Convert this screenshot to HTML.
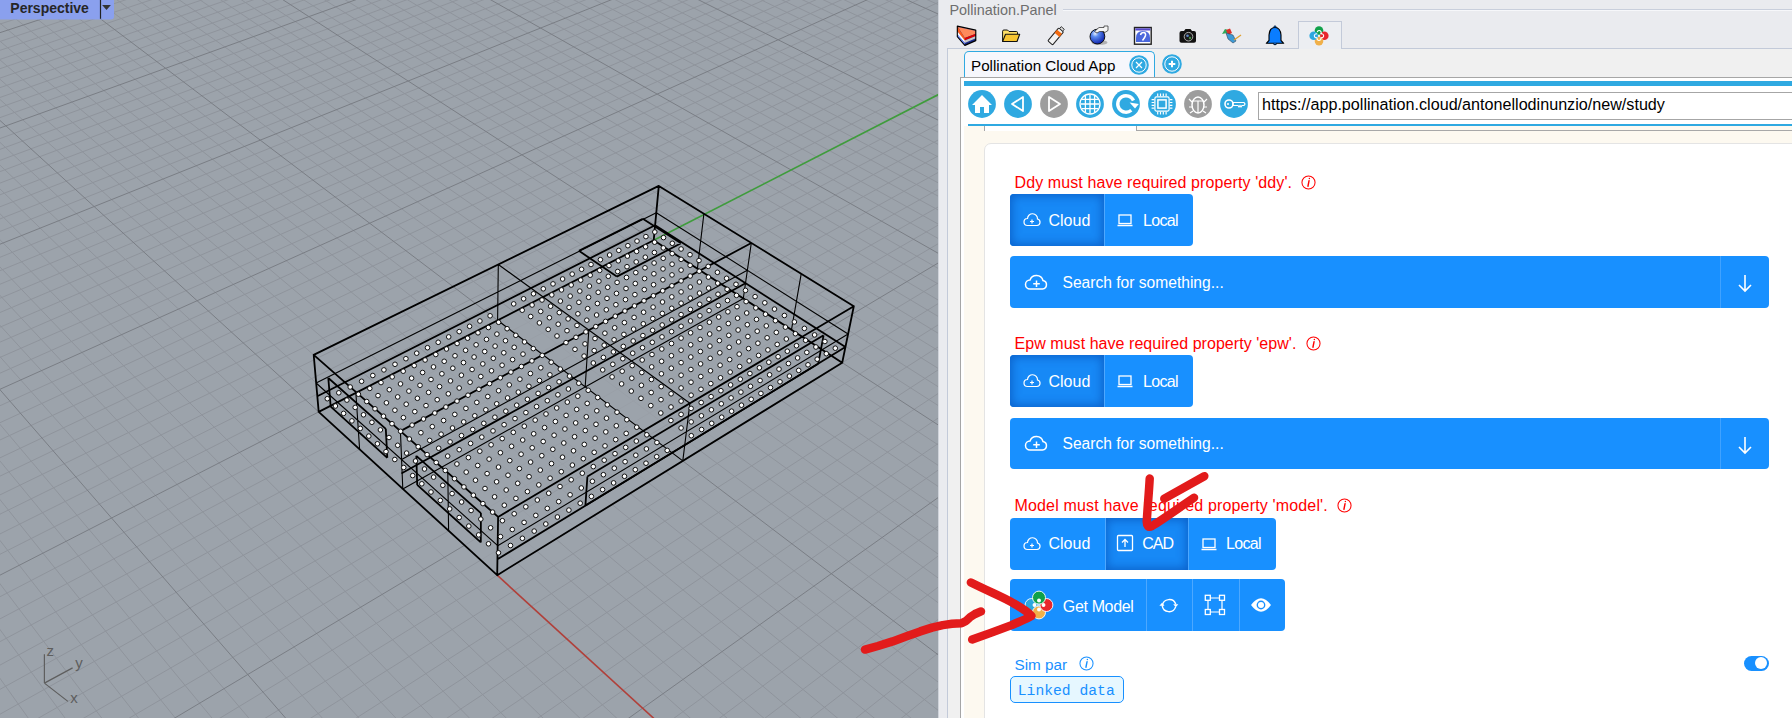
<!DOCTYPE html>
<html><head><meta charset="utf-8"><style>
html,body{margin:0;padding:0;width:1792px;height:718px;overflow:hidden;background:#fff;font-family:"Liberation Sans",sans-serif}
#vp{position:absolute;left:0;top:0;width:938px;height:718px;overflow:hidden}
</style></head><body>
<div id="vp"><svg width="938" height="718" viewBox="0 0 938 718" style="position:absolute;left:0;top:0">
<rect width="938" height="718" fill="#9ca3ab"/>
<path d="M-5 0.8L13.2 -5M-5 8.9L38.6 -5M-5 17.2L64 -5M-5 25.7L89.4 -5M-5 43.1L140.2 -5M-5 52L165.6 -5M-5 61.1L191 -5M-5 70.4L216.4 -5M-5 79.8L241.8 -5M-5 89.4L267.2 -5M-5 99.2L292.6 -5M-5 109.2L318 -5M-5 119.4L343.4 -5M-5 140.4L394.3 -5M-5 151.2L419.7 -5M-5 162.2L445.1 -5M-5 173.5L470.6 -5M-5 185L496 -5M-5 196.7L521.4 -5M-5 208.7L546.9 -5M-5 220.9L572.3 -5M-5 233.4L597.7 -5M-5 259.3L648.6 -5M-5 272.7L674.1 -5M-5 286.3L699.5 -5M-5 671.4L31.8 723M-5 300.3L725 -5M-5 622.8L68.7 723M-5 314.6L750.5 -5M-5 577.2L105.5 723M-5 329.3L775.9 -5M-5 534.1L142.4 723M-5 344.3L801.4 -5M-5 493.4L179.3 723M-5 359.6L826.8 -5M-5 455L216.1 723M-5 375.4L852.3 -5M-5 418.5L253 723M-5 408L903.3 -5M-5 351.1L326.7 723M-5 425L928.7 -5M-5 319.9L363.6 723M-5 442.3L943 0.2M-5 290.1L400.5 723M-5 460.2L943 12.3M-5 261.8L437.4 723M-5 478.5L943 24.8M-5 234.7L474.3 723M-5 497.3L943 37.5M-5 208.8L511.2 723M-5 516.6L943 50.6M-5 184.1L548.1 723M-5 536.4L943 64.1M-5 160.4L585 723M-5 556.8L943 77.9M-5 137.7L621.9 723M-5 599.3L943 106.8M-5 95L695.7 723M-5 621.5L943 121.8M-5 74.9L732.6 723M-5 644.3L943 137.4M-5 55.6L769.5 723M-5 667.8L943 153.3M-5 37L806.4 723M-5 692.1L943 169.8M-5 19.1L843.4 723M-5 717L943 186.7M-5 1.9L880.3 723M29.8 723L943 204.2M7.2 -5L917.2 723M75.3 723L943 222.3M27.8 -5L943 714.2M120.9 723L943 240.9M48.5 -5L943 685.9M211.9 723L943 280M89.7 -5L943 632M257.4 723L943 300.6M110.4 -5L943 606.3M303 723L943 321.8M131 -5L943 581.5M348.5 723L943 343.8M151.7 -5L943 557.5M394.1 723L943 366.7M172.3 -5L943 534.3M439.6 723L943 390.3M192.9 -5L943 511.7M485.2 723L943 414.8M213.6 -5L943 489.8M530.7 723L943 440.2M234.2 -5L943 468.6M576.3 723L943 466.7M254.9 -5L943 448.1M667.4 723L943 522.7M296.2 -5L943 408.6M713 723L943 552.4M316.9 -5L943 389.8M758.6 723L943 583.4M337.5 -5L943 371.4M804.2 723L943 615.6M358.2 -5L943 353.6M849.8 723L943 649.3M378.9 -5L943 336.2M895.4 723L943 684.5M399.5 -5L943 319.3M941 723L943 721.3M420.2 -5L943 302.9M440.9 -5L943 286.8M461.5 -5L943 271.2M502.9 -5L943 241.2M523.5 -5L943 226.7M544.2 -5L943 212.6M564.9 -5L943 198.8M585.6 -5L943 185.4M606.3 -5L943 172.2M627 -5L943 159.4M647.6 -5L943 146.9M668.3 -5L943 134.6M709.7 -5L943 110.9M730.4 -5L943 99.5M751.1 -5L943 88.3M771.8 -5L943 77.3M792.5 -5L943 66.6M813.2 -5L943 56.1M833.9 -5L943 45.8M854.6 -5L943 35.7M875.3 -5L943 25.9M916.7 -5L943 6.7M937.5 -5L943 -2.5" stroke="#8f949c" stroke-width="1" fill="none"/>
<path d="M-5 34.3L114.8 -5M-5 129.8L368.9 -5M-5 246.2L623.2 -5M-5 391.5L877.8 -5M-5 384L289.9 723M166.4 723L943 260.1M69.1 -5L943 658.5M621.9 723L943 494.1M275.6 -5L943 428.1M482.2 -5L943 256M689 -5L943 122.6M896 -5L943 16.2M-5 577.7L318.7 411.9M-5 115.9L318.7 411.9" stroke="#7a7e85" stroke-width="1" fill="none"/>
<path d="M497.2 575.2L658.8 723" stroke="#b0403a" stroke-width="1.6" fill="none"/>
<path d="M653.7 240.3L943 92.2" stroke="#3f9c3c" stroke-width="1.6" fill="none"/>
<polygon points="318.7,411.9 497.2,575.2 842.2,362.7 653.7,240.3" fill="#9ca3ab" fill-opacity="0.75"/>
<path d="M497.6 320.3L682.8 460.9M498.3 264.5L689.9 403.3M402.8 488.9L743.3 298.5M497.6 320.3L498.3 264.5M682.8 460.9L689.9 403.3M402.8 488.9L400.4 431.1M743.3 298.5L751.3 243M585.2 386.9L588.8 330.1M697.4 268.7L703.9 213.7M791.5 329.7L801.2 273.8M359.6 449.3L355.8 391.9M448.6 530.8L447.8 472.7M401.6 459.6L747.3 270.3M316.1 383L497.7 545.7M497.7 545.7L848.1 334M848.1 334L656.3 212.7M656.3 212.7L316.1 383" stroke="#000" stroke-width="1.1" fill="none"/>
<path d="M330.7 406.7L387.3 457.8M387.3 457.8L385.8 428.9M385.8 428.9L328.3 378M328.3 378L330.7 406.7M417.2 484.9L480.8 542.4M480.8 542.4L480.9 513.1M480.9 513.1L416.3 455.8M416.3 455.8L417.2 484.9M578.9 250.8L616.8 276.6M616.8 276.6L681 243.3M681 243.3L642.8 218.8M642.8 218.8L578.9 250.8M585.4 505.6L818.2 363.7M818.2 363.7L823.6 335.3M823.6 335.3L587.4 476.5M587.4 476.5L585.4 505.6" stroke="#000" stroke-width="1.8" fill="none"/>
<path d="M318.7 411.9L497.2 575.2M313.7 354.9L498.1 516.9M318.7 411.9L313.7 354.9M497.2 575.2L842.2 362.7M498.1 516.9L853.8 306.2M497.2 575.2L498.1 516.9M842.2 362.7L653.7 240.3M853.8 306.2L658.8 185.9M842.2 362.7L853.8 306.2M653.7 240.3L318.7 411.9M658.8 185.9L313.7 354.9M653.7 240.3L658.8 185.9M400.4 431.1L751.3 243M497.5 559.3L845.4 347.1M845.4 347.1L655.1 225.3M655.1 225.3L317.3 396.3M402.2 473L745.5 283.2" stroke="#000" stroke-width="1.8" fill="none" stroke-linecap="round"/>
<path d="M327.3 398.7m-2.3 0a2.3 2.3 0 1 0 4.6 0a2.3 2.3 0 1 0 -4.6 0M338.8 392.8m-2.3 0a2.3 2.3 0 1 0 4.6 0a2.3 2.3 0 1 0 -4.6 0M350.2 387m-2.3 0a2.3 2.3 0 1 0 4.6 0a2.3 2.3 0 1 0 -4.6 0M361.6 381.3m-2.3 0a2.3 2.3 0 1 0 4.6 0a2.3 2.3 0 1 0 -4.6 0M372.8 375.5m-2.3 0a2.3 2.3 0 1 0 4.6 0a2.3 2.3 0 1 0 -4.6 0M383.9 369.9m-2.3 0a2.3 2.3 0 1 0 4.6 0a2.3 2.3 0 1 0 -4.6 0M395 364.3m-2.3 0a2.3 2.3 0 1 0 4.6 0a2.3 2.3 0 1 0 -4.6 0M405.9 358.7m-2.3 0a2.3 2.3 0 1 0 4.6 0a2.3 2.3 0 1 0 -4.6 0M416.7 353.2m-2.3 0a2.3 2.3 0 1 0 4.6 0a2.3 2.3 0 1 0 -4.6 0M427.5 347.7m-2.3 0a2.3 2.3 0 1 0 4.6 0a2.3 2.3 0 1 0 -4.6 0M438.2 342.3m-2.3 0a2.3 2.3 0 1 0 4.6 0a2.3 2.3 0 1 0 -4.6 0M448.7 336.9m-2.3 0a2.3 2.3 0 1 0 4.6 0a2.3 2.3 0 1 0 -4.6 0M459.2 331.6m-2.3 0a2.3 2.3 0 1 0 4.6 0a2.3 2.3 0 1 0 -4.6 0M469.6 326.3m-2.3 0a2.3 2.3 0 1 0 4.6 0a2.3 2.3 0 1 0 -4.6 0M479.9 321m-2.3 0a2.3 2.3 0 1 0 4.6 0a2.3 2.3 0 1 0 -4.6 0M490.1 315.8m-2.3 0a2.3 2.3 0 1 0 4.6 0a2.3 2.3 0 1 0 -4.6 0M654.8 232m-2.3 0a2.3 2.3 0 1 0 4.6 0a2.3 2.3 0 1 0 -4.6 0M645.9 236.6m-2.3 0a2.3 2.3 0 1 0 4.6 0a2.3 2.3 0 1 0 -4.6 0M637 241.1m-2.3 0a2.3 2.3 0 1 0 4.6 0a2.3 2.3 0 1 0 -4.6 0M627.9 245.7m-2.3 0a2.3 2.3 0 1 0 4.6 0a2.3 2.3 0 1 0 -4.6 0M618.8 250.4m-2.3 0a2.3 2.3 0 1 0 4.6 0a2.3 2.3 0 1 0 -4.6 0M609.6 255m-2.3 0a2.3 2.3 0 1 0 4.6 0a2.3 2.3 0 1 0 -4.6 0M600.4 259.7m-2.3 0a2.3 2.3 0 1 0 4.6 0a2.3 2.3 0 1 0 -4.6 0M591 264.5m-2.3 0a2.3 2.3 0 1 0 4.6 0a2.3 2.3 0 1 0 -4.6 0M581.6 269.3m-2.3 0a2.3 2.3 0 1 0 4.6 0a2.3 2.3 0 1 0 -4.6 0M572.2 274.1m-2.3 0a2.3 2.3 0 1 0 4.6 0a2.3 2.3 0 1 0 -4.6 0M562.6 279m-2.3 0a2.3 2.3 0 1 0 4.6 0a2.3 2.3 0 1 0 -4.6 0M553 283.9m-2.3 0a2.3 2.3 0 1 0 4.6 0a2.3 2.3 0 1 0 -4.6 0M543.3 288.8m-2.3 0a2.3 2.3 0 1 0 4.6 0a2.3 2.3 0 1 0 -4.6 0M533.5 293.8m-2.3 0a2.3 2.3 0 1 0 4.6 0a2.3 2.3 0 1 0 -4.6 0M523.6 298.8m-2.3 0a2.3 2.3 0 1 0 4.6 0a2.3 2.3 0 1 0 -4.6 0M513.7 303.9m-2.3 0a2.3 2.3 0 1 0 4.6 0a2.3 2.3 0 1 0 -4.6 0M335.4 406m-2.3 0a2.3 2.3 0 1 0 4.6 0a2.3 2.3 0 1 0 -4.6 0M346.9 400.1m-2.3 0a2.3 2.3 0 1 0 4.6 0a2.3 2.3 0 1 0 -4.6 0M358.4 394.2m-2.3 0a2.3 2.3 0 1 0 4.6 0a2.3 2.3 0 1 0 -4.6 0M369.8 388.4m-2.3 0a2.3 2.3 0 1 0 4.6 0a2.3 2.3 0 1 0 -4.6 0M381 382.6m-2.3 0a2.3 2.3 0 1 0 4.6 0a2.3 2.3 0 1 0 -4.6 0M392.2 376.9m-2.3 0a2.3 2.3 0 1 0 4.6 0a2.3 2.3 0 1 0 -4.6 0M403.2 371.2m-2.3 0a2.3 2.3 0 1 0 4.6 0a2.3 2.3 0 1 0 -4.6 0M414.2 365.6m-2.3 0a2.3 2.3 0 1 0 4.6 0a2.3 2.3 0 1 0 -4.6 0M425.1 360m-2.3 0a2.3 2.3 0 1 0 4.6 0a2.3 2.3 0 1 0 -4.6 0M435.8 354.5m-2.3 0a2.3 2.3 0 1 0 4.6 0a2.3 2.3 0 1 0 -4.6 0M446.5 349m-2.3 0a2.3 2.3 0 1 0 4.6 0a2.3 2.3 0 1 0 -4.6 0M457.1 343.5m-2.3 0a2.3 2.3 0 1 0 4.6 0a2.3 2.3 0 1 0 -4.6 0M467.6 338.2m-2.3 0a2.3 2.3 0 1 0 4.6 0a2.3 2.3 0 1 0 -4.6 0M478 332.8m-2.3 0a2.3 2.3 0 1 0 4.6 0a2.3 2.3 0 1 0 -4.6 0M488.4 327.5m-2.3 0a2.3 2.3 0 1 0 4.6 0a2.3 2.3 0 1 0 -4.6 0M498.6 322.3m-2.3 0a2.3 2.3 0 1 0 4.6 0a2.3 2.3 0 1 0 -4.6 0M663.5 237.6m-2.3 0a2.3 2.3 0 1 0 4.6 0a2.3 2.3 0 1 0 -4.6 0M654.6 242.2m-2.3 0a2.3 2.3 0 1 0 4.6 0a2.3 2.3 0 1 0 -4.6 0M645.6 246.8m-2.3 0a2.3 2.3 0 1 0 4.6 0a2.3 2.3 0 1 0 -4.6 0M636.6 251.4m-2.3 0a2.3 2.3 0 1 0 4.6 0a2.3 2.3 0 1 0 -4.6 0M627.4 256.1m-2.3 0a2.3 2.3 0 1 0 4.6 0a2.3 2.3 0 1 0 -4.6 0M618.3 260.8m-2.3 0a2.3 2.3 0 1 0 4.6 0a2.3 2.3 0 1 0 -4.6 0M609 265.6m-2.3 0a2.3 2.3 0 1 0 4.6 0a2.3 2.3 0 1 0 -4.6 0M599.7 270.4m-2.3 0a2.3 2.3 0 1 0 4.6 0a2.3 2.3 0 1 0 -4.6 0M590.2 275.2m-2.3 0a2.3 2.3 0 1 0 4.6 0a2.3 2.3 0 1 0 -4.6 0M580.7 280.1m-2.3 0a2.3 2.3 0 1 0 4.6 0a2.3 2.3 0 1 0 -4.6 0M571.2 285m-2.3 0a2.3 2.3 0 1 0 4.6 0a2.3 2.3 0 1 0 -4.6 0M561.5 289.9m-2.3 0a2.3 2.3 0 1 0 4.6 0a2.3 2.3 0 1 0 -4.6 0M551.8 294.9m-2.3 0a2.3 2.3 0 1 0 4.6 0a2.3 2.3 0 1 0 -4.6 0M542 300m-2.3 0a2.3 2.3 0 1 0 4.6 0a2.3 2.3 0 1 0 -4.6 0M532.1 305m-2.3 0a2.3 2.3 0 1 0 4.6 0a2.3 2.3 0 1 0 -4.6 0M522.2 310.2m-2.3 0a2.3 2.3 0 1 0 4.6 0a2.3 2.3 0 1 0 -4.6 0M343.6 413.4m-2.3 0a2.3 2.3 0 1 0 4.6 0a2.3 2.3 0 1 0 -4.6 0M355.2 407.4m-2.3 0a2.3 2.3 0 1 0 4.6 0a2.3 2.3 0 1 0 -4.6 0M366.7 401.5m-2.3 0a2.3 2.3 0 1 0 4.6 0a2.3 2.3 0 1 0 -4.6 0M378 395.6m-2.3 0a2.3 2.3 0 1 0 4.6 0a2.3 2.3 0 1 0 -4.6 0M389.3 389.7m-2.3 0a2.3 2.3 0 1 0 4.6 0a2.3 2.3 0 1 0 -4.6 0M400.5 383.9m-2.3 0a2.3 2.3 0 1 0 4.6 0a2.3 2.3 0 1 0 -4.6 0M411.6 378.2m-2.3 0a2.3 2.3 0 1 0 4.6 0a2.3 2.3 0 1 0 -4.6 0M422.6 372.5m-2.3 0a2.3 2.3 0 1 0 4.6 0a2.3 2.3 0 1 0 -4.6 0M433.5 366.9m-2.3 0a2.3 2.3 0 1 0 4.6 0a2.3 2.3 0 1 0 -4.6 0M444.2 361.3m-2.3 0a2.3 2.3 0 1 0 4.6 0a2.3 2.3 0 1 0 -4.6 0M455 355.8m-2.3 0a2.3 2.3 0 1 0 4.6 0a2.3 2.3 0 1 0 -4.6 0M465.6 350.3m-2.3 0a2.3 2.3 0 1 0 4.6 0a2.3 2.3 0 1 0 -4.6 0M476.1 344.8m-2.3 0a2.3 2.3 0 1 0 4.6 0a2.3 2.3 0 1 0 -4.6 0M486.5 339.4m-2.3 0a2.3 2.3 0 1 0 4.6 0a2.3 2.3 0 1 0 -4.6 0M496.9 334.1m-2.3 0a2.3 2.3 0 1 0 4.6 0a2.3 2.3 0 1 0 -4.6 0M507.1 328.7m-2.3 0a2.3 2.3 0 1 0 4.6 0a2.3 2.3 0 1 0 -4.6 0M672.3 243.3m-2.3 0a2.3 2.3 0 1 0 4.6 0a2.3 2.3 0 1 0 -4.6 0M663.3 247.9m-2.3 0a2.3 2.3 0 1 0 4.6 0a2.3 2.3 0 1 0 -4.6 0M654.4 252.5m-2.3 0a2.3 2.3 0 1 0 4.6 0a2.3 2.3 0 1 0 -4.6 0M645.3 257.2m-2.3 0a2.3 2.3 0 1 0 4.6 0a2.3 2.3 0 1 0 -4.6 0M636.2 261.9m-2.3 0a2.3 2.3 0 1 0 4.6 0a2.3 2.3 0 1 0 -4.6 0M627 266.7m-2.3 0a2.3 2.3 0 1 0 4.6 0a2.3 2.3 0 1 0 -4.6 0M617.7 271.5m-2.3 0a2.3 2.3 0 1 0 4.6 0a2.3 2.3 0 1 0 -4.6 0M608.3 276.3m-2.3 0a2.3 2.3 0 1 0 4.6 0a2.3 2.3 0 1 0 -4.6 0M598.9 281.2m-2.3 0a2.3 2.3 0 1 0 4.6 0a2.3 2.3 0 1 0 -4.6 0M589.4 286.1m-2.3 0a2.3 2.3 0 1 0 4.6 0a2.3 2.3 0 1 0 -4.6 0M579.8 291.1m-2.3 0a2.3 2.3 0 1 0 4.6 0a2.3 2.3 0 1 0 -4.6 0M570.2 296.1m-2.3 0a2.3 2.3 0 1 0 4.6 0a2.3 2.3 0 1 0 -4.6 0M560.4 301.1m-2.3 0a2.3 2.3 0 1 0 4.6 0a2.3 2.3 0 1 0 -4.6 0M550.6 306.2m-2.3 0a2.3 2.3 0 1 0 4.6 0a2.3 2.3 0 1 0 -4.6 0M540.7 311.4m-2.3 0a2.3 2.3 0 1 0 4.6 0a2.3 2.3 0 1 0 -4.6 0M530.7 316.5m-2.3 0a2.3 2.3 0 1 0 4.6 0a2.3 2.3 0 1 0 -4.6 0M351.9 420.9m-2.3 0a2.3 2.3 0 1 0 4.6 0a2.3 2.3 0 1 0 -4.6 0M363.5 414.8m-2.3 0a2.3 2.3 0 1 0 4.6 0a2.3 2.3 0 1 0 -4.6 0M375 408.8m-2.3 0a2.3 2.3 0 1 0 4.6 0a2.3 2.3 0 1 0 -4.6 0M386.4 402.8m-2.3 0a2.3 2.3 0 1 0 4.6 0a2.3 2.3 0 1 0 -4.6 0M397.7 396.9m-2.3 0a2.3 2.3 0 1 0 4.6 0a2.3 2.3 0 1 0 -4.6 0M408.9 391.1m-2.3 0a2.3 2.3 0 1 0 4.6 0a2.3 2.3 0 1 0 -4.6 0M420 385.3m-2.3 0a2.3 2.3 0 1 0 4.6 0a2.3 2.3 0 1 0 -4.6 0M431 379.5m-2.3 0a2.3 2.3 0 1 0 4.6 0a2.3 2.3 0 1 0 -4.6 0M441.9 373.8m-2.3 0a2.3 2.3 0 1 0 4.6 0a2.3 2.3 0 1 0 -4.6 0M452.8 368.2m-2.3 0a2.3 2.3 0 1 0 4.6 0a2.3 2.3 0 1 0 -4.6 0M463.5 362.6m-2.3 0a2.3 2.3 0 1 0 4.6 0a2.3 2.3 0 1 0 -4.6 0M474.1 357m-2.3 0a2.3 2.3 0 1 0 4.6 0a2.3 2.3 0 1 0 -4.6 0M484.7 351.5m-2.3 0a2.3 2.3 0 1 0 4.6 0a2.3 2.3 0 1 0 -4.6 0M495.1 346.1m-2.3 0a2.3 2.3 0 1 0 4.6 0a2.3 2.3 0 1 0 -4.6 0M505.5 340.7m-2.3 0a2.3 2.3 0 1 0 4.6 0a2.3 2.3 0 1 0 -4.6 0M515.8 335.3m-2.3 0a2.3 2.3 0 1 0 4.6 0a2.3 2.3 0 1 0 -4.6 0M681.1 249m-2.3 0a2.3 2.3 0 1 0 4.6 0a2.3 2.3 0 1 0 -4.6 0M672.2 253.6m-2.3 0a2.3 2.3 0 1 0 4.6 0a2.3 2.3 0 1 0 -4.6 0M663.2 258.3m-2.3 0a2.3 2.3 0 1 0 4.6 0a2.3 2.3 0 1 0 -4.6 0M654.1 263m-2.3 0a2.3 2.3 0 1 0 4.6 0a2.3 2.3 0 1 0 -4.6 0M645 267.8m-2.3 0a2.3 2.3 0 1 0 4.6 0a2.3 2.3 0 1 0 -4.6 0M635.8 272.6m-2.3 0a2.3 2.3 0 1 0 4.6 0a2.3 2.3 0 1 0 -4.6 0M626.5 277.5m-2.3 0a2.3 2.3 0 1 0 4.6 0a2.3 2.3 0 1 0 -4.6 0M617.1 282.4m-2.3 0a2.3 2.3 0 1 0 4.6 0a2.3 2.3 0 1 0 -4.6 0M607.7 287.3m-2.3 0a2.3 2.3 0 1 0 4.6 0a2.3 2.3 0 1 0 -4.6 0M598.2 292.3m-2.3 0a2.3 2.3 0 1 0 4.6 0a2.3 2.3 0 1 0 -4.6 0M588.6 297.3m-2.3 0a2.3 2.3 0 1 0 4.6 0a2.3 2.3 0 1 0 -4.6 0M578.9 302.3m-2.3 0a2.3 2.3 0 1 0 4.6 0a2.3 2.3 0 1 0 -4.6 0M569.1 307.4m-2.3 0a2.3 2.3 0 1 0 4.6 0a2.3 2.3 0 1 0 -4.6 0M559.3 312.6m-2.3 0a2.3 2.3 0 1 0 4.6 0a2.3 2.3 0 1 0 -4.6 0M549.4 317.7m-2.3 0a2.3 2.3 0 1 0 4.6 0a2.3 2.3 0 1 0 -4.6 0M539.4 322.9m-2.3 0a2.3 2.3 0 1 0 4.6 0a2.3 2.3 0 1 0 -4.6 0M360.3 428.4m-2.3 0a2.3 2.3 0 1 0 4.6 0a2.3 2.3 0 1 0 -4.6 0M371.9 422.3m-2.3 0a2.3 2.3 0 1 0 4.6 0a2.3 2.3 0 1 0 -4.6 0M383.5 416.2m-2.3 0a2.3 2.3 0 1 0 4.6 0a2.3 2.3 0 1 0 -4.6 0M394.9 410.2m-2.3 0a2.3 2.3 0 1 0 4.6 0a2.3 2.3 0 1 0 -4.6 0M406.2 404.2m-2.3 0a2.3 2.3 0 1 0 4.6 0a2.3 2.3 0 1 0 -4.6 0M417.4 398.3m-2.3 0a2.3 2.3 0 1 0 4.6 0a2.3 2.3 0 1 0 -4.6 0M428.6 392.4m-2.3 0a2.3 2.3 0 1 0 4.6 0a2.3 2.3 0 1 0 -4.6 0M439.6 386.6m-2.3 0a2.3 2.3 0 1 0 4.6 0a2.3 2.3 0 1 0 -4.6 0M450.5 380.9m-2.3 0a2.3 2.3 0 1 0 4.6 0a2.3 2.3 0 1 0 -4.6 0M461.4 375.2m-2.3 0a2.3 2.3 0 1 0 4.6 0a2.3 2.3 0 1 0 -4.6 0M472.1 369.5m-2.3 0a2.3 2.3 0 1 0 4.6 0a2.3 2.3 0 1 0 -4.6 0M482.8 363.9m-2.3 0a2.3 2.3 0 1 0 4.6 0a2.3 2.3 0 1 0 -4.6 0M493.3 358.3m-2.3 0a2.3 2.3 0 1 0 4.6 0a2.3 2.3 0 1 0 -4.6 0M503.8 352.8m-2.3 0a2.3 2.3 0 1 0 4.6 0a2.3 2.3 0 1 0 -4.6 0M514.2 347.3m-2.3 0a2.3 2.3 0 1 0 4.6 0a2.3 2.3 0 1 0 -4.6 0M524.5 341.9m-2.3 0a2.3 2.3 0 1 0 4.6 0a2.3 2.3 0 1 0 -4.6 0M690 254.7m-2.3 0a2.3 2.3 0 1 0 4.6 0a2.3 2.3 0 1 0 -4.6 0M681.1 259.4m-2.3 0a2.3 2.3 0 1 0 4.6 0a2.3 2.3 0 1 0 -4.6 0M672.1 264.2m-2.3 0a2.3 2.3 0 1 0 4.6 0a2.3 2.3 0 1 0 -4.6 0M663 268.9m-2.3 0a2.3 2.3 0 1 0 4.6 0a2.3 2.3 0 1 0 -4.6 0M653.9 273.8m-2.3 0a2.3 2.3 0 1 0 4.6 0a2.3 2.3 0 1 0 -4.6 0M644.6 278.6m-2.3 0a2.3 2.3 0 1 0 4.6 0a2.3 2.3 0 1 0 -4.6 0M635.3 283.5m-2.3 0a2.3 2.3 0 1 0 4.6 0a2.3 2.3 0 1 0 -4.6 0M626 288.5m-2.3 0a2.3 2.3 0 1 0 4.6 0a2.3 2.3 0 1 0 -4.6 0M616.5 293.4m-2.3 0a2.3 2.3 0 1 0 4.6 0a2.3 2.3 0 1 0 -4.6 0M607 298.4m-2.3 0a2.3 2.3 0 1 0 4.6 0a2.3 2.3 0 1 0 -4.6 0M597.4 303.5m-2.3 0a2.3 2.3 0 1 0 4.6 0a2.3 2.3 0 1 0 -4.6 0M587.7 308.6m-2.3 0a2.3 2.3 0 1 0 4.6 0a2.3 2.3 0 1 0 -4.6 0M577.9 313.8m-2.3 0a2.3 2.3 0 1 0 4.6 0a2.3 2.3 0 1 0 -4.6 0M568.1 318.9m-2.3 0a2.3 2.3 0 1 0 4.6 0a2.3 2.3 0 1 0 -4.6 0M558.2 324.2m-2.3 0a2.3 2.3 0 1 0 4.6 0a2.3 2.3 0 1 0 -4.6 0M548.2 329.4m-2.3 0a2.3 2.3 0 1 0 4.6 0a2.3 2.3 0 1 0 -4.6 0M368.8 436.1m-2.3 0a2.3 2.3 0 1 0 4.6 0a2.3 2.3 0 1 0 -4.6 0M380.4 429.9m-2.3 0a2.3 2.3 0 1 0 4.6 0a2.3 2.3 0 1 0 -4.6 0M392 423.7m-2.3 0a2.3 2.3 0 1 0 4.6 0a2.3 2.3 0 1 0 -4.6 0M403.4 417.6m-2.3 0a2.3 2.3 0 1 0 4.6 0a2.3 2.3 0 1 0 -4.6 0M414.8 411.6m-2.3 0a2.3 2.3 0 1 0 4.6 0a2.3 2.3 0 1 0 -4.6 0M426 405.6m-2.3 0a2.3 2.3 0 1 0 4.6 0a2.3 2.3 0 1 0 -4.6 0M437.2 399.7m-2.3 0a2.3 2.3 0 1 0 4.6 0a2.3 2.3 0 1 0 -4.6 0M448.3 393.8m-2.3 0a2.3 2.3 0 1 0 4.6 0a2.3 2.3 0 1 0 -4.6 0M459.2 388m-2.3 0a2.3 2.3 0 1 0 4.6 0a2.3 2.3 0 1 0 -4.6 0M470.1 382.2m-2.3 0a2.3 2.3 0 1 0 4.6 0a2.3 2.3 0 1 0 -4.6 0M480.8 376.5m-2.3 0a2.3 2.3 0 1 0 4.6 0a2.3 2.3 0 1 0 -4.6 0M491.5 370.8m-2.3 0a2.3 2.3 0 1 0 4.6 0a2.3 2.3 0 1 0 -4.6 0M502.1 365.2m-2.3 0a2.3 2.3 0 1 0 4.6 0a2.3 2.3 0 1 0 -4.6 0M512.6 359.6m-2.3 0a2.3 2.3 0 1 0 4.6 0a2.3 2.3 0 1 0 -4.6 0M523 354.1m-2.3 0a2.3 2.3 0 1 0 4.6 0a2.3 2.3 0 1 0 -4.6 0M533.3 348.6m-2.3 0a2.3 2.3 0 1 0 4.6 0a2.3 2.3 0 1 0 -4.6 0M699 260.5m-2.3 0a2.3 2.3 0 1 0 4.6 0a2.3 2.3 0 1 0 -4.6 0M690.1 265.3m-2.3 0a2.3 2.3 0 1 0 4.6 0a2.3 2.3 0 1 0 -4.6 0M681.1 270.1m-2.3 0a2.3 2.3 0 1 0 4.6 0a2.3 2.3 0 1 0 -4.6 0M672 274.9m-2.3 0a2.3 2.3 0 1 0 4.6 0a2.3 2.3 0 1 0 -4.6 0M662.9 279.8m-2.3 0a2.3 2.3 0 1 0 4.6 0a2.3 2.3 0 1 0 -4.6 0M653.6 284.7m-2.3 0a2.3 2.3 0 1 0 4.6 0a2.3 2.3 0 1 0 -4.6 0M644.3 289.6m-2.3 0a2.3 2.3 0 1 0 4.6 0a2.3 2.3 0 1 0 -4.6 0M634.9 294.6m-2.3 0a2.3 2.3 0 1 0 4.6 0a2.3 2.3 0 1 0 -4.6 0M625.5 299.6m-2.3 0a2.3 2.3 0 1 0 4.6 0a2.3 2.3 0 1 0 -4.6 0M615.9 304.7m-2.3 0a2.3 2.3 0 1 0 4.6 0a2.3 2.3 0 1 0 -4.6 0M606.3 309.8m-2.3 0a2.3 2.3 0 1 0 4.6 0a2.3 2.3 0 1 0 -4.6 0M596.6 315m-2.3 0a2.3 2.3 0 1 0 4.6 0a2.3 2.3 0 1 0 -4.6 0M586.8 320.2m-2.3 0a2.3 2.3 0 1 0 4.6 0a2.3 2.3 0 1 0 -4.6 0M577 325.4m-2.3 0a2.3 2.3 0 1 0 4.6 0a2.3 2.3 0 1 0 -4.6 0M567 330.7m-2.3 0a2.3 2.3 0 1 0 4.6 0a2.3 2.3 0 1 0 -4.6 0M557 336m-2.3 0a2.3 2.3 0 1 0 4.6 0a2.3 2.3 0 1 0 -4.6 0M377.4 443.8m-2.3 0a2.3 2.3 0 1 0 4.6 0a2.3 2.3 0 1 0 -4.6 0M389 437.5m-2.3 0a2.3 2.3 0 1 0 4.6 0a2.3 2.3 0 1 0 -4.6 0M400.6 431.3m-2.3 0a2.3 2.3 0 1 0 4.6 0a2.3 2.3 0 1 0 -4.6 0M412.1 425.1m-2.3 0a2.3 2.3 0 1 0 4.6 0a2.3 2.3 0 1 0 -4.6 0M423.5 419m-2.3 0a2.3 2.3 0 1 0 4.6 0a2.3 2.3 0 1 0 -4.6 0M434.8 413m-2.3 0a2.3 2.3 0 1 0 4.6 0a2.3 2.3 0 1 0 -4.6 0M445.9 407m-2.3 0a2.3 2.3 0 1 0 4.6 0a2.3 2.3 0 1 0 -4.6 0M457 401.1m-2.3 0a2.3 2.3 0 1 0 4.6 0a2.3 2.3 0 1 0 -4.6 0M468 395.2m-2.3 0a2.3 2.3 0 1 0 4.6 0a2.3 2.3 0 1 0 -4.6 0M478.9 389.3m-2.3 0a2.3 2.3 0 1 0 4.6 0a2.3 2.3 0 1 0 -4.6 0M489.6 383.6m-2.3 0a2.3 2.3 0 1 0 4.6 0a2.3 2.3 0 1 0 -4.6 0M500.3 377.8m-2.3 0a2.3 2.3 0 1 0 4.6 0a2.3 2.3 0 1 0 -4.6 0M510.9 372.1m-2.3 0a2.3 2.3 0 1 0 4.6 0a2.3 2.3 0 1 0 -4.6 0M521.4 366.5m-2.3 0a2.3 2.3 0 1 0 4.6 0a2.3 2.3 0 1 0 -4.6 0M531.9 360.9m-2.3 0a2.3 2.3 0 1 0 4.6 0a2.3 2.3 0 1 0 -4.6 0M542.2 355.4m-2.3 0a2.3 2.3 0 1 0 4.6 0a2.3 2.3 0 1 0 -4.6 0M708.2 266.4m-2.3 0a2.3 2.3 0 1 0 4.6 0a2.3 2.3 0 1 0 -4.6 0M699.2 271.2m-2.3 0a2.3 2.3 0 1 0 4.6 0a2.3 2.3 0 1 0 -4.6 0M690.2 276m-2.3 0a2.3 2.3 0 1 0 4.6 0a2.3 2.3 0 1 0 -4.6 0M681.1 280.9m-2.3 0a2.3 2.3 0 1 0 4.6 0a2.3 2.3 0 1 0 -4.6 0M671.9 285.8m-2.3 0a2.3 2.3 0 1 0 4.6 0a2.3 2.3 0 1 0 -4.6 0M662.7 290.8m-2.3 0a2.3 2.3 0 1 0 4.6 0a2.3 2.3 0 1 0 -4.6 0M653.4 295.8m-2.3 0a2.3 2.3 0 1 0 4.6 0a2.3 2.3 0 1 0 -4.6 0M644 300.8m-2.3 0a2.3 2.3 0 1 0 4.6 0a2.3 2.3 0 1 0 -4.6 0M634.5 305.9m-2.3 0a2.3 2.3 0 1 0 4.6 0a2.3 2.3 0 1 0 -4.6 0M624.9 311m-2.3 0a2.3 2.3 0 1 0 4.6 0a2.3 2.3 0 1 0 -4.6 0M615.3 316.2m-2.3 0a2.3 2.3 0 1 0 4.6 0a2.3 2.3 0 1 0 -4.6 0M605.6 321.4m-2.3 0a2.3 2.3 0 1 0 4.6 0a2.3 2.3 0 1 0 -4.6 0M595.8 326.6m-2.3 0a2.3 2.3 0 1 0 4.6 0a2.3 2.3 0 1 0 -4.6 0M585.9 331.9m-2.3 0a2.3 2.3 0 1 0 4.6 0a2.3 2.3 0 1 0 -4.6 0M576 337.3m-2.3 0a2.3 2.3 0 1 0 4.6 0a2.3 2.3 0 1 0 -4.6 0M566 342.6m-2.3 0a2.3 2.3 0 1 0 4.6 0a2.3 2.3 0 1 0 -4.6 0M386 451.6m-2.3 0a2.3 2.3 0 1 0 4.6 0a2.3 2.3 0 1 0 -4.6 0M397.7 445.3m-2.3 0a2.3 2.3 0 1 0 4.6 0a2.3 2.3 0 1 0 -4.6 0M409.4 439m-2.3 0a2.3 2.3 0 1 0 4.6 0a2.3 2.3 0 1 0 -4.6 0M420.9 432.7m-2.3 0a2.3 2.3 0 1 0 4.6 0a2.3 2.3 0 1 0 -4.6 0M432.3 426.6m-2.3 0a2.3 2.3 0 1 0 4.6 0a2.3 2.3 0 1 0 -4.6 0M443.6 420.5m-2.3 0a2.3 2.3 0 1 0 4.6 0a2.3 2.3 0 1 0 -4.6 0M454.8 414.4m-2.3 0a2.3 2.3 0 1 0 4.6 0a2.3 2.3 0 1 0 -4.6 0M465.9 408.4m-2.3 0a2.3 2.3 0 1 0 4.6 0a2.3 2.3 0 1 0 -4.6 0M476.8 402.4m-2.3 0a2.3 2.3 0 1 0 4.6 0a2.3 2.3 0 1 0 -4.6 0M487.8 396.5m-2.3 0a2.3 2.3 0 1 0 4.6 0a2.3 2.3 0 1 0 -4.6 0M498.6 390.7m-2.3 0a2.3 2.3 0 1 0 4.6 0a2.3 2.3 0 1 0 -4.6 0M509.3 384.9m-2.3 0a2.3 2.3 0 1 0 4.6 0a2.3 2.3 0 1 0 -4.6 0M519.9 379.2m-2.3 0a2.3 2.3 0 1 0 4.6 0a2.3 2.3 0 1 0 -4.6 0M530.4 373.5m-2.3 0a2.3 2.3 0 1 0 4.6 0a2.3 2.3 0 1 0 -4.6 0M540.8 367.8m-2.3 0a2.3 2.3 0 1 0 4.6 0a2.3 2.3 0 1 0 -4.6 0M551.2 362.2m-2.3 0a2.3 2.3 0 1 0 4.6 0a2.3 2.3 0 1 0 -4.6 0M717.4 272.3m-2.3 0a2.3 2.3 0 1 0 4.6 0a2.3 2.3 0 1 0 -4.6 0M708.4 277.1m-2.3 0a2.3 2.3 0 1 0 4.6 0a2.3 2.3 0 1 0 -4.6 0M699.4 282m-2.3 0a2.3 2.3 0 1 0 4.6 0a2.3 2.3 0 1 0 -4.6 0M690.3 287m-2.3 0a2.3 2.3 0 1 0 4.6 0a2.3 2.3 0 1 0 -4.6 0M681.1 291.9m-2.3 0a2.3 2.3 0 1 0 4.6 0a2.3 2.3 0 1 0 -4.6 0M671.8 296.9m-2.3 0a2.3 2.3 0 1 0 4.6 0a2.3 2.3 0 1 0 -4.6 0M662.5 302m-2.3 0a2.3 2.3 0 1 0 4.6 0a2.3 2.3 0 1 0 -4.6 0M653.1 307.1m-2.3 0a2.3 2.3 0 1 0 4.6 0a2.3 2.3 0 1 0 -4.6 0M643.6 312.2m-2.3 0a2.3 2.3 0 1 0 4.6 0a2.3 2.3 0 1 0 -4.6 0M634.1 317.4m-2.3 0a2.3 2.3 0 1 0 4.6 0a2.3 2.3 0 1 0 -4.6 0M624.4 322.6m-2.3 0a2.3 2.3 0 1 0 4.6 0a2.3 2.3 0 1 0 -4.6 0M614.7 327.8m-2.3 0a2.3 2.3 0 1 0 4.6 0a2.3 2.3 0 1 0 -4.6 0M604.9 333.2m-2.3 0a2.3 2.3 0 1 0 4.6 0a2.3 2.3 0 1 0 -4.6 0M595 338.5m-2.3 0a2.3 2.3 0 1 0 4.6 0a2.3 2.3 0 1 0 -4.6 0M585 343.9m-2.3 0a2.3 2.3 0 1 0 4.6 0a2.3 2.3 0 1 0 -4.6 0M575 349.3m-2.3 0a2.3 2.3 0 1 0 4.6 0a2.3 2.3 0 1 0 -4.6 0M394.8 459.5m-2.3 0a2.3 2.3 0 1 0 4.6 0a2.3 2.3 0 1 0 -4.6 0M406.6 453.1m-2.3 0a2.3 2.3 0 1 0 4.6 0a2.3 2.3 0 1 0 -4.6 0M418.2 446.7m-2.3 0a2.3 2.3 0 1 0 4.6 0a2.3 2.3 0 1 0 -4.6 0M429.7 440.4m-2.3 0a2.3 2.3 0 1 0 4.6 0a2.3 2.3 0 1 0 -4.6 0M441.1 434.2m-2.3 0a2.3 2.3 0 1 0 4.6 0a2.3 2.3 0 1 0 -4.6 0M452.5 428m-2.3 0a2.3 2.3 0 1 0 4.6 0a2.3 2.3 0 1 0 -4.6 0M463.7 421.9m-2.3 0a2.3 2.3 0 1 0 4.6 0a2.3 2.3 0 1 0 -4.6 0M474.8 415.8m-2.3 0a2.3 2.3 0 1 0 4.6 0a2.3 2.3 0 1 0 -4.6 0M485.8 409.8m-2.3 0a2.3 2.3 0 1 0 4.6 0a2.3 2.3 0 1 0 -4.6 0M496.7 403.8m-2.3 0a2.3 2.3 0 1 0 4.6 0a2.3 2.3 0 1 0 -4.6 0M507.6 397.9m-2.3 0a2.3 2.3 0 1 0 4.6 0a2.3 2.3 0 1 0 -4.6 0M518.3 392.1m-2.3 0a2.3 2.3 0 1 0 4.6 0a2.3 2.3 0 1 0 -4.6 0M528.9 386.3m-2.3 0a2.3 2.3 0 1 0 4.6 0a2.3 2.3 0 1 0 -4.6 0M539.5 380.5m-2.3 0a2.3 2.3 0 1 0 4.6 0a2.3 2.3 0 1 0 -4.6 0M549.9 374.8m-2.3 0a2.3 2.3 0 1 0 4.6 0a2.3 2.3 0 1 0 -4.6 0M560.3 369.1m-2.3 0a2.3 2.3 0 1 0 4.6 0a2.3 2.3 0 1 0 -4.6 0M726.6 278.3m-2.3 0a2.3 2.3 0 1 0 4.6 0a2.3 2.3 0 1 0 -4.6 0M717.7 283.2m-2.3 0a2.3 2.3 0 1 0 4.6 0a2.3 2.3 0 1 0 -4.6 0M708.6 288.1m-2.3 0a2.3 2.3 0 1 0 4.6 0a2.3 2.3 0 1 0 -4.6 0M699.5 293.1m-2.3 0a2.3 2.3 0 1 0 4.6 0a2.3 2.3 0 1 0 -4.6 0M690.3 298.1m-2.3 0a2.3 2.3 0 1 0 4.6 0a2.3 2.3 0 1 0 -4.6 0M681.1 303.2m-2.3 0a2.3 2.3 0 1 0 4.6 0a2.3 2.3 0 1 0 -4.6 0M671.7 308.3m-2.3 0a2.3 2.3 0 1 0 4.6 0a2.3 2.3 0 1 0 -4.6 0M662.3 313.4m-2.3 0a2.3 2.3 0 1 0 4.6 0a2.3 2.3 0 1 0 -4.6 0M652.8 318.6m-2.3 0a2.3 2.3 0 1 0 4.6 0a2.3 2.3 0 1 0 -4.6 0M643.3 323.8m-2.3 0a2.3 2.3 0 1 0 4.6 0a2.3 2.3 0 1 0 -4.6 0M633.6 329.1m-2.3 0a2.3 2.3 0 1 0 4.6 0a2.3 2.3 0 1 0 -4.6 0M623.9 334.4m-2.3 0a2.3 2.3 0 1 0 4.6 0a2.3 2.3 0 1 0 -4.6 0M614.1 339.8m-2.3 0a2.3 2.3 0 1 0 4.6 0a2.3 2.3 0 1 0 -4.6 0M604.2 345.2m-2.3 0a2.3 2.3 0 1 0 4.6 0a2.3 2.3 0 1 0 -4.6 0M594.2 350.6m-2.3 0a2.3 2.3 0 1 0 4.6 0a2.3 2.3 0 1 0 -4.6 0M584.1 356.1m-2.3 0a2.3 2.3 0 1 0 4.6 0a2.3 2.3 0 1 0 -4.6 0M403.7 467.5m-2.3 0a2.3 2.3 0 1 0 4.6 0a2.3 2.3 0 1 0 -4.6 0M415.5 461m-2.3 0a2.3 2.3 0 1 0 4.6 0a2.3 2.3 0 1 0 -4.6 0M427.1 454.6m-2.3 0a2.3 2.3 0 1 0 4.6 0a2.3 2.3 0 1 0 -4.6 0M438.7 448.2m-2.3 0a2.3 2.3 0 1 0 4.6 0a2.3 2.3 0 1 0 -4.6 0M450.1 441.9m-2.3 0a2.3 2.3 0 1 0 4.6 0a2.3 2.3 0 1 0 -4.6 0M461.5 435.6m-2.3 0a2.3 2.3 0 1 0 4.6 0a2.3 2.3 0 1 0 -4.6 0M472.7 429.5m-2.3 0a2.3 2.3 0 1 0 4.6 0a2.3 2.3 0 1 0 -4.6 0M483.8 423.3m-2.3 0a2.3 2.3 0 1 0 4.6 0a2.3 2.3 0 1 0 -4.6 0M494.9 417.2m-2.3 0a2.3 2.3 0 1 0 4.6 0a2.3 2.3 0 1 0 -4.6 0M505.8 411.2m-2.3 0a2.3 2.3 0 1 0 4.6 0a2.3 2.3 0 1 0 -4.6 0M516.7 405.2m-2.3 0a2.3 2.3 0 1 0 4.6 0a2.3 2.3 0 1 0 -4.6 0M527.4 399.3m-2.3 0a2.3 2.3 0 1 0 4.6 0a2.3 2.3 0 1 0 -4.6 0M538.1 393.4m-2.3 0a2.3 2.3 0 1 0 4.6 0a2.3 2.3 0 1 0 -4.6 0M548.6 387.6m-2.3 0a2.3 2.3 0 1 0 4.6 0a2.3 2.3 0 1 0 -4.6 0M559.1 381.8m-2.3 0a2.3 2.3 0 1 0 4.6 0a2.3 2.3 0 1 0 -4.6 0M569.5 376.1m-2.3 0a2.3 2.3 0 1 0 4.6 0a2.3 2.3 0 1 0 -4.6 0M736 284.3m-2.3 0a2.3 2.3 0 1 0 4.6 0a2.3 2.3 0 1 0 -4.6 0M727.1 289.3m-2.3 0a2.3 2.3 0 1 0 4.6 0a2.3 2.3 0 1 0 -4.6 0M718 294.2m-2.3 0a2.3 2.3 0 1 0 4.6 0a2.3 2.3 0 1 0 -4.6 0M708.9 299.3m-2.3 0a2.3 2.3 0 1 0 4.6 0a2.3 2.3 0 1 0 -4.6 0M699.7 304.3m-2.3 0a2.3 2.3 0 1 0 4.6 0a2.3 2.3 0 1 0 -4.6 0M690.4 309.5m-2.3 0a2.3 2.3 0 1 0 4.6 0a2.3 2.3 0 1 0 -4.6 0M681.1 314.6m-2.3 0a2.3 2.3 0 1 0 4.6 0a2.3 2.3 0 1 0 -4.6 0M671.7 319.8m-2.3 0a2.3 2.3 0 1 0 4.6 0a2.3 2.3 0 1 0 -4.6 0M662.2 325m-2.3 0a2.3 2.3 0 1 0 4.6 0a2.3 2.3 0 1 0 -4.6 0M652.6 330.3m-2.3 0a2.3 2.3 0 1 0 4.6 0a2.3 2.3 0 1 0 -4.6 0M642.9 335.6m-2.3 0a2.3 2.3 0 1 0 4.6 0a2.3 2.3 0 1 0 -4.6 0M633.2 341m-2.3 0a2.3 2.3 0 1 0 4.6 0a2.3 2.3 0 1 0 -4.6 0M623.3 346.4m-2.3 0a2.3 2.3 0 1 0 4.6 0a2.3 2.3 0 1 0 -4.6 0M613.4 351.9m-2.3 0a2.3 2.3 0 1 0 4.6 0a2.3 2.3 0 1 0 -4.6 0M603.4 357.4m-2.3 0a2.3 2.3 0 1 0 4.6 0a2.3 2.3 0 1 0 -4.6 0M593.3 363m-2.3 0a2.3 2.3 0 1 0 4.6 0a2.3 2.3 0 1 0 -4.6 0M412.7 475.6m-2.3 0a2.3 2.3 0 1 0 4.6 0a2.3 2.3 0 1 0 -4.6 0M424.5 469m-2.3 0a2.3 2.3 0 1 0 4.6 0a2.3 2.3 0 1 0 -4.6 0M436.2 462.5m-2.3 0a2.3 2.3 0 1 0 4.6 0a2.3 2.3 0 1 0 -4.6 0M447.7 456.1m-2.3 0a2.3 2.3 0 1 0 4.6 0a2.3 2.3 0 1 0 -4.6 0M459.2 449.7m-2.3 0a2.3 2.3 0 1 0 4.6 0a2.3 2.3 0 1 0 -4.6 0M470.6 443.4m-2.3 0a2.3 2.3 0 1 0 4.6 0a2.3 2.3 0 1 0 -4.6 0M481.8 437.1m-2.3 0a2.3 2.3 0 1 0 4.6 0a2.3 2.3 0 1 0 -4.6 0M493 430.9m-2.3 0a2.3 2.3 0 1 0 4.6 0a2.3 2.3 0 1 0 -4.6 0M504.1 424.7m-2.3 0a2.3 2.3 0 1 0 4.6 0a2.3 2.3 0 1 0 -4.6 0M515 418.6m-2.3 0a2.3 2.3 0 1 0 4.6 0a2.3 2.3 0 1 0 -4.6 0M525.9 412.6m-2.3 0a2.3 2.3 0 1 0 4.6 0a2.3 2.3 0 1 0 -4.6 0M536.6 406.6m-2.3 0a2.3 2.3 0 1 0 4.6 0a2.3 2.3 0 1 0 -4.6 0M547.3 400.7m-2.3 0a2.3 2.3 0 1 0 4.6 0a2.3 2.3 0 1 0 -4.6 0M557.9 394.8m-2.3 0a2.3 2.3 0 1 0 4.6 0a2.3 2.3 0 1 0 -4.6 0M568.4 389m-2.3 0a2.3 2.3 0 1 0 4.6 0a2.3 2.3 0 1 0 -4.6 0M578.8 383.2m-2.3 0a2.3 2.3 0 1 0 4.6 0a2.3 2.3 0 1 0 -4.6 0M745.5 290.4m-2.3 0a2.3 2.3 0 1 0 4.6 0a2.3 2.3 0 1 0 -4.6 0M736.5 295.4m-2.3 0a2.3 2.3 0 1 0 4.6 0a2.3 2.3 0 1 0 -4.6 0M727.5 300.5m-2.3 0a2.3 2.3 0 1 0 4.6 0a2.3 2.3 0 1 0 -4.6 0M718.3 305.5m-2.3 0a2.3 2.3 0 1 0 4.6 0a2.3 2.3 0 1 0 -4.6 0M709.1 310.6m-2.3 0a2.3 2.3 0 1 0 4.6 0a2.3 2.3 0 1 0 -4.6 0M699.9 315.8m-2.3 0a2.3 2.3 0 1 0 4.6 0a2.3 2.3 0 1 0 -4.6 0M690.5 321m-2.3 0a2.3 2.3 0 1 0 4.6 0a2.3 2.3 0 1 0 -4.6 0M681.1 326.3m-2.3 0a2.3 2.3 0 1 0 4.6 0a2.3 2.3 0 1 0 -4.6 0M671.6 331.6m-2.3 0a2.3 2.3 0 1 0 4.6 0a2.3 2.3 0 1 0 -4.6 0M662 336.9m-2.3 0a2.3 2.3 0 1 0 4.6 0a2.3 2.3 0 1 0 -4.6 0M652.3 342.3m-2.3 0a2.3 2.3 0 1 0 4.6 0a2.3 2.3 0 1 0 -4.6 0M642.5 347.7m-2.3 0a2.3 2.3 0 1 0 4.6 0a2.3 2.3 0 1 0 -4.6 0M632.7 353.2m-2.3 0a2.3 2.3 0 1 0 4.6 0a2.3 2.3 0 1 0 -4.6 0M622.8 358.7m-2.3 0a2.3 2.3 0 1 0 4.6 0a2.3 2.3 0 1 0 -4.6 0M612.8 364.3m-2.3 0a2.3 2.3 0 1 0 4.6 0a2.3 2.3 0 1 0 -4.6 0M602.7 369.9m-2.3 0a2.3 2.3 0 1 0 4.6 0a2.3 2.3 0 1 0 -4.6 0M421.8 483.8m-2.3 0a2.3 2.3 0 1 0 4.6 0a2.3 2.3 0 1 0 -4.6 0M433.6 477.1m-2.3 0a2.3 2.3 0 1 0 4.6 0a2.3 2.3 0 1 0 -4.6 0M445.3 470.5m-2.3 0a2.3 2.3 0 1 0 4.6 0a2.3 2.3 0 1 0 -4.6 0M456.9 464m-2.3 0a2.3 2.3 0 1 0 4.6 0a2.3 2.3 0 1 0 -4.6 0M468.4 457.6m-2.3 0a2.3 2.3 0 1 0 4.6 0a2.3 2.3 0 1 0 -4.6 0M479.8 451.2m-2.3 0a2.3 2.3 0 1 0 4.6 0a2.3 2.3 0 1 0 -4.6 0M491.1 444.8m-2.3 0a2.3 2.3 0 1 0 4.6 0a2.3 2.3 0 1 0 -4.6 0M502.2 438.6m-2.3 0a2.3 2.3 0 1 0 4.6 0a2.3 2.3 0 1 0 -4.6 0M513.3 432.3m-2.3 0a2.3 2.3 0 1 0 4.6 0a2.3 2.3 0 1 0 -4.6 0M524.3 426.2m-2.3 0a2.3 2.3 0 1 0 4.6 0a2.3 2.3 0 1 0 -4.6 0M535.2 420.1m-2.3 0a2.3 2.3 0 1 0 4.6 0a2.3 2.3 0 1 0 -4.6 0M546 414m-2.3 0a2.3 2.3 0 1 0 4.6 0a2.3 2.3 0 1 0 -4.6 0M556.7 408m-2.3 0a2.3 2.3 0 1 0 4.6 0a2.3 2.3 0 1 0 -4.6 0M567.3 402.1m-2.3 0a2.3 2.3 0 1 0 4.6 0a2.3 2.3 0 1 0 -4.6 0M577.8 396.2m-2.3 0a2.3 2.3 0 1 0 4.6 0a2.3 2.3 0 1 0 -4.6 0M588.2 390.3m-2.3 0a2.3 2.3 0 1 0 4.6 0a2.3 2.3 0 1 0 -4.6 0M755.1 296.6m-2.3 0a2.3 2.3 0 1 0 4.6 0a2.3 2.3 0 1 0 -4.6 0M746.1 301.6m-2.3 0a2.3 2.3 0 1 0 4.6 0a2.3 2.3 0 1 0 -4.6 0M737 306.7m-2.3 0a2.3 2.3 0 1 0 4.6 0a2.3 2.3 0 1 0 -4.6 0M727.9 311.8m-2.3 0a2.3 2.3 0 1 0 4.6 0a2.3 2.3 0 1 0 -4.6 0M718.7 317m-2.3 0a2.3 2.3 0 1 0 4.6 0a2.3 2.3 0 1 0 -4.6 0M709.4 322.2m-2.3 0a2.3 2.3 0 1 0 4.6 0a2.3 2.3 0 1 0 -4.6 0M700 327.5m-2.3 0a2.3 2.3 0 1 0 4.6 0a2.3 2.3 0 1 0 -4.6 0M690.6 332.8m-2.3 0a2.3 2.3 0 1 0 4.6 0a2.3 2.3 0 1 0 -4.6 0M681.1 338.1m-2.3 0a2.3 2.3 0 1 0 4.6 0a2.3 2.3 0 1 0 -4.6 0M671.5 343.5m-2.3 0a2.3 2.3 0 1 0 4.6 0a2.3 2.3 0 1 0 -4.6 0M661.8 349m-2.3 0a2.3 2.3 0 1 0 4.6 0a2.3 2.3 0 1 0 -4.6 0M652 354.5m-2.3 0a2.3 2.3 0 1 0 4.6 0a2.3 2.3 0 1 0 -4.6 0M642.2 360m-2.3 0a2.3 2.3 0 1 0 4.6 0a2.3 2.3 0 1 0 -4.6 0M632.2 365.6m-2.3 0a2.3 2.3 0 1 0 4.6 0a2.3 2.3 0 1 0 -4.6 0M622.2 371.2m-2.3 0a2.3 2.3 0 1 0 4.6 0a2.3 2.3 0 1 0 -4.6 0M612.1 376.9m-2.3 0a2.3 2.3 0 1 0 4.6 0a2.3 2.3 0 1 0 -4.6 0M431 492m-2.3 0a2.3 2.3 0 1 0 4.6 0a2.3 2.3 0 1 0 -4.6 0M442.8 485.3m-2.3 0a2.3 2.3 0 1 0 4.6 0a2.3 2.3 0 1 0 -4.6 0M454.5 478.7m-2.3 0a2.3 2.3 0 1 0 4.6 0a2.3 2.3 0 1 0 -4.6 0M466.2 472.1m-2.3 0a2.3 2.3 0 1 0 4.6 0a2.3 2.3 0 1 0 -4.6 0M477.7 465.5m-2.3 0a2.3 2.3 0 1 0 4.6 0a2.3 2.3 0 1 0 -4.6 0M489.1 459.1m-2.3 0a2.3 2.3 0 1 0 4.6 0a2.3 2.3 0 1 0 -4.6 0M500.4 452.7m-2.3 0a2.3 2.3 0 1 0 4.6 0a2.3 2.3 0 1 0 -4.6 0M511.6 446.3m-2.3 0a2.3 2.3 0 1 0 4.6 0a2.3 2.3 0 1 0 -4.6 0M522.7 440m-2.3 0a2.3 2.3 0 1 0 4.6 0a2.3 2.3 0 1 0 -4.6 0M533.7 433.8m-2.3 0a2.3 2.3 0 1 0 4.6 0a2.3 2.3 0 1 0 -4.6 0M544.6 427.6m-2.3 0a2.3 2.3 0 1 0 4.6 0a2.3 2.3 0 1 0 -4.6 0M555.4 421.5m-2.3 0a2.3 2.3 0 1 0 4.6 0a2.3 2.3 0 1 0 -4.6 0M566.1 415.4m-2.3 0a2.3 2.3 0 1 0 4.6 0a2.3 2.3 0 1 0 -4.6 0M576.7 409.4m-2.3 0a2.3 2.3 0 1 0 4.6 0a2.3 2.3 0 1 0 -4.6 0M587.2 403.4m-2.3 0a2.3 2.3 0 1 0 4.6 0a2.3 2.3 0 1 0 -4.6 0M597.7 397.5m-2.3 0a2.3 2.3 0 1 0 4.6 0a2.3 2.3 0 1 0 -4.6 0M764.8 302.8m-2.3 0a2.3 2.3 0 1 0 4.6 0a2.3 2.3 0 1 0 -4.6 0M755.8 307.9m-2.3 0a2.3 2.3 0 1 0 4.6 0a2.3 2.3 0 1 0 -4.6 0M746.7 313m-2.3 0a2.3 2.3 0 1 0 4.6 0a2.3 2.3 0 1 0 -4.6 0M737.6 318.2m-2.3 0a2.3 2.3 0 1 0 4.6 0a2.3 2.3 0 1 0 -4.6 0M728.3 323.5m-2.3 0a2.3 2.3 0 1 0 4.6 0a2.3 2.3 0 1 0 -4.6 0M719 328.7m-2.3 0a2.3 2.3 0 1 0 4.6 0a2.3 2.3 0 1 0 -4.6 0M709.7 334m-2.3 0a2.3 2.3 0 1 0 4.6 0a2.3 2.3 0 1 0 -4.6 0M700.2 339.4m-2.3 0a2.3 2.3 0 1 0 4.6 0a2.3 2.3 0 1 0 -4.6 0M690.7 344.8m-2.3 0a2.3 2.3 0 1 0 4.6 0a2.3 2.3 0 1 0 -4.6 0M681.1 350.2m-2.3 0a2.3 2.3 0 1 0 4.6 0a2.3 2.3 0 1 0 -4.6 0M671.4 355.7m-2.3 0a2.3 2.3 0 1 0 4.6 0a2.3 2.3 0 1 0 -4.6 0M661.6 361.3m-2.3 0a2.3 2.3 0 1 0 4.6 0a2.3 2.3 0 1 0 -4.6 0M651.7 366.9m-2.3 0a2.3 2.3 0 1 0 4.6 0a2.3 2.3 0 1 0 -4.6 0M641.8 372.5m-2.3 0a2.3 2.3 0 1 0 4.6 0a2.3 2.3 0 1 0 -4.6 0M631.8 378.2m-2.3 0a2.3 2.3 0 1 0 4.6 0a2.3 2.3 0 1 0 -4.6 0M621.6 383.9m-2.3 0a2.3 2.3 0 1 0 4.6 0a2.3 2.3 0 1 0 -4.6 0M440.3 500.4m-2.3 0a2.3 2.3 0 1 0 4.6 0a2.3 2.3 0 1 0 -4.6 0M452.1 493.6m-2.3 0a2.3 2.3 0 1 0 4.6 0a2.3 2.3 0 1 0 -4.6 0M463.9 486.9m-2.3 0a2.3 2.3 0 1 0 4.6 0a2.3 2.3 0 1 0 -4.6 0M475.5 480.2m-2.3 0a2.3 2.3 0 1 0 4.6 0a2.3 2.3 0 1 0 -4.6 0M487.1 473.6m-2.3 0a2.3 2.3 0 1 0 4.6 0a2.3 2.3 0 1 0 -4.6 0M498.5 467.1m-2.3 0a2.3 2.3 0 1 0 4.6 0a2.3 2.3 0 1 0 -4.6 0M509.8 460.6m-2.3 0a2.3 2.3 0 1 0 4.6 0a2.3 2.3 0 1 0 -4.6 0M521.1 454.2m-2.3 0a2.3 2.3 0 1 0 4.6 0a2.3 2.3 0 1 0 -4.6 0M532.2 447.8m-2.3 0a2.3 2.3 0 1 0 4.6 0a2.3 2.3 0 1 0 -4.6 0M543.2 441.5m-2.3 0a2.3 2.3 0 1 0 4.6 0a2.3 2.3 0 1 0 -4.6 0M554.1 435.2m-2.3 0a2.3 2.3 0 1 0 4.6 0a2.3 2.3 0 1 0 -4.6 0M564.9 429m-2.3 0a2.3 2.3 0 1 0 4.6 0a2.3 2.3 0 1 0 -4.6 0M575.7 422.9m-2.3 0a2.3 2.3 0 1 0 4.6 0a2.3 2.3 0 1 0 -4.6 0M586.3 416.8m-2.3 0a2.3 2.3 0 1 0 4.6 0a2.3 2.3 0 1 0 -4.6 0M596.8 410.8m-2.3 0a2.3 2.3 0 1 0 4.6 0a2.3 2.3 0 1 0 -4.6 0M607.3 404.8m-2.3 0a2.3 2.3 0 1 0 4.6 0a2.3 2.3 0 1 0 -4.6 0M774.5 309.1m-2.3 0a2.3 2.3 0 1 0 4.6 0a2.3 2.3 0 1 0 -4.6 0M765.5 314.2m-2.3 0a2.3 2.3 0 1 0 4.6 0a2.3 2.3 0 1 0 -4.6 0M756.5 319.4m-2.3 0a2.3 2.3 0 1 0 4.6 0a2.3 2.3 0 1 0 -4.6 0M747.3 324.7m-2.3 0a2.3 2.3 0 1 0 4.6 0a2.3 2.3 0 1 0 -4.6 0M738.1 330m-2.3 0a2.3 2.3 0 1 0 4.6 0a2.3 2.3 0 1 0 -4.6 0M728.8 335.3m-2.3 0a2.3 2.3 0 1 0 4.6 0a2.3 2.3 0 1 0 -4.6 0M719.4 340.6m-2.3 0a2.3 2.3 0 1 0 4.6 0a2.3 2.3 0 1 0 -4.6 0M709.9 346.1m-2.3 0a2.3 2.3 0 1 0 4.6 0a2.3 2.3 0 1 0 -4.6 0M700.4 351.5m-2.3 0a2.3 2.3 0 1 0 4.6 0a2.3 2.3 0 1 0 -4.6 0M690.8 357m-2.3 0a2.3 2.3 0 1 0 4.6 0a2.3 2.3 0 1 0 -4.6 0M681.1 362.6m-2.3 0a2.3 2.3 0 1 0 4.6 0a2.3 2.3 0 1 0 -4.6 0M671.3 368.2m-2.3 0a2.3 2.3 0 1 0 4.6 0a2.3 2.3 0 1 0 -4.6 0M661.4 373.8m-2.3 0a2.3 2.3 0 1 0 4.6 0a2.3 2.3 0 1 0 -4.6 0M651.4 379.5m-2.3 0a2.3 2.3 0 1 0 4.6 0a2.3 2.3 0 1 0 -4.6 0M641.4 385.3m-2.3 0a2.3 2.3 0 1 0 4.6 0a2.3 2.3 0 1 0 -4.6 0M631.3 391.1m-2.3 0a2.3 2.3 0 1 0 4.6 0a2.3 2.3 0 1 0 -4.6 0M449.7 508.9m-2.3 0a2.3 2.3 0 1 0 4.6 0a2.3 2.3 0 1 0 -4.6 0M461.6 502m-2.3 0a2.3 2.3 0 1 0 4.6 0a2.3 2.3 0 1 0 -4.6 0M473.4 495.2m-2.3 0a2.3 2.3 0 1 0 4.6 0a2.3 2.3 0 1 0 -4.6 0M485 488.5m-2.3 0a2.3 2.3 0 1 0 4.6 0a2.3 2.3 0 1 0 -4.6 0M496.6 481.8m-2.3 0a2.3 2.3 0 1 0 4.6 0a2.3 2.3 0 1 0 -4.6 0M508 475.2m-2.3 0a2.3 2.3 0 1 0 4.6 0a2.3 2.3 0 1 0 -4.6 0M519.4 468.6m-2.3 0a2.3 2.3 0 1 0 4.6 0a2.3 2.3 0 1 0 -4.6 0M530.6 462.1m-2.3 0a2.3 2.3 0 1 0 4.6 0a2.3 2.3 0 1 0 -4.6 0M541.8 455.7m-2.3 0a2.3 2.3 0 1 0 4.6 0a2.3 2.3 0 1 0 -4.6 0M552.8 449.3m-2.3 0a2.3 2.3 0 1 0 4.6 0a2.3 2.3 0 1 0 -4.6 0M563.8 443m-2.3 0a2.3 2.3 0 1 0 4.6 0a2.3 2.3 0 1 0 -4.6 0M574.6 436.7m-2.3 0a2.3 2.3 0 1 0 4.6 0a2.3 2.3 0 1 0 -4.6 0M585.3 430.5m-2.3 0a2.3 2.3 0 1 0 4.6 0a2.3 2.3 0 1 0 -4.6 0M596 424.3m-2.3 0a2.3 2.3 0 1 0 4.6 0a2.3 2.3 0 1 0 -4.6 0M606.5 418.2m-2.3 0a2.3 2.3 0 1 0 4.6 0a2.3 2.3 0 1 0 -4.6 0M617 412.2m-2.3 0a2.3 2.3 0 1 0 4.6 0a2.3 2.3 0 1 0 -4.6 0M784.4 315.5m-2.3 0a2.3 2.3 0 1 0 4.6 0a2.3 2.3 0 1 0 -4.6 0M775.4 320.7m-2.3 0a2.3 2.3 0 1 0 4.6 0a2.3 2.3 0 1 0 -4.6 0M766.3 325.9m-2.3 0a2.3 2.3 0 1 0 4.6 0a2.3 2.3 0 1 0 -4.6 0M757.2 331.2m-2.3 0a2.3 2.3 0 1 0 4.6 0a2.3 2.3 0 1 0 -4.6 0M747.9 336.5m-2.3 0a2.3 2.3 0 1 0 4.6 0a2.3 2.3 0 1 0 -4.6 0M738.6 341.9m-2.3 0a2.3 2.3 0 1 0 4.6 0a2.3 2.3 0 1 0 -4.6 0M729.2 347.3m-2.3 0a2.3 2.3 0 1 0 4.6 0a2.3 2.3 0 1 0 -4.6 0M719.8 352.8m-2.3 0a2.3 2.3 0 1 0 4.6 0a2.3 2.3 0 1 0 -4.6 0M710.2 358.3m-2.3 0a2.3 2.3 0 1 0 4.6 0a2.3 2.3 0 1 0 -4.6 0M700.6 363.9m-2.3 0a2.3 2.3 0 1 0 4.6 0a2.3 2.3 0 1 0 -4.6 0M690.9 369.5m-2.3 0a2.3 2.3 0 1 0 4.6 0a2.3 2.3 0 1 0 -4.6 0M681.1 375.2m-2.3 0a2.3 2.3 0 1 0 4.6 0a2.3 2.3 0 1 0 -4.6 0M671.2 380.9m-2.3 0a2.3 2.3 0 1 0 4.6 0a2.3 2.3 0 1 0 -4.6 0M661.2 386.6m-2.3 0a2.3 2.3 0 1 0 4.6 0a2.3 2.3 0 1 0 -4.6 0M651.2 392.5m-2.3 0a2.3 2.3 0 1 0 4.6 0a2.3 2.3 0 1 0 -4.6 0M641 398.3m-2.3 0a2.3 2.3 0 1 0 4.6 0a2.3 2.3 0 1 0 -4.6 0M459.2 517.5m-2.3 0a2.3 2.3 0 1 0 4.6 0a2.3 2.3 0 1 0 -4.6 0M471.1 510.5m-2.3 0a2.3 2.3 0 1 0 4.6 0a2.3 2.3 0 1 0 -4.6 0M482.9 503.6m-2.3 0a2.3 2.3 0 1 0 4.6 0a2.3 2.3 0 1 0 -4.6 0M494.6 496.8m-2.3 0a2.3 2.3 0 1 0 4.6 0a2.3 2.3 0 1 0 -4.6 0M506.2 490m-2.3 0a2.3 2.3 0 1 0 4.6 0a2.3 2.3 0 1 0 -4.6 0M517.7 483.3m-2.3 0a2.3 2.3 0 1 0 4.6 0a2.3 2.3 0 1 0 -4.6 0M529.1 476.7m-2.3 0a2.3 2.3 0 1 0 4.6 0a2.3 2.3 0 1 0 -4.6 0M540.3 470.1m-2.3 0a2.3 2.3 0 1 0 4.6 0a2.3 2.3 0 1 0 -4.6 0M551.5 463.6m-2.3 0a2.3 2.3 0 1 0 4.6 0a2.3 2.3 0 1 0 -4.6 0M562.5 457.2m-2.3 0a2.3 2.3 0 1 0 4.6 0a2.3 2.3 0 1 0 -4.6 0M573.5 450.8m-2.3 0a2.3 2.3 0 1 0 4.6 0a2.3 2.3 0 1 0 -4.6 0M584.3 444.4m-2.3 0a2.3 2.3 0 1 0 4.6 0a2.3 2.3 0 1 0 -4.6 0M595.1 438.2m-2.3 0a2.3 2.3 0 1 0 4.6 0a2.3 2.3 0 1 0 -4.6 0M605.8 431.9m-2.3 0a2.3 2.3 0 1 0 4.6 0a2.3 2.3 0 1 0 -4.6 0M616.3 425.8m-2.3 0a2.3 2.3 0 1 0 4.6 0a2.3 2.3 0 1 0 -4.6 0M626.8 419.7m-2.3 0a2.3 2.3 0 1 0 4.6 0a2.3 2.3 0 1 0 -4.6 0M794.4 321.9m-2.3 0a2.3 2.3 0 1 0 4.6 0a2.3 2.3 0 1 0 -4.6 0M785.4 327.1m-2.3 0a2.3 2.3 0 1 0 4.6 0a2.3 2.3 0 1 0 -4.6 0M776.3 332.4m-2.3 0a2.3 2.3 0 1 0 4.6 0a2.3 2.3 0 1 0 -4.6 0M767.1 337.8m-2.3 0a2.3 2.3 0 1 0 4.6 0a2.3 2.3 0 1 0 -4.6 0M757.9 343.2m-2.3 0a2.3 2.3 0 1 0 4.6 0a2.3 2.3 0 1 0 -4.6 0M748.6 348.6m-2.3 0a2.3 2.3 0 1 0 4.6 0a2.3 2.3 0 1 0 -4.6 0M739.2 354.1m-2.3 0a2.3 2.3 0 1 0 4.6 0a2.3 2.3 0 1 0 -4.6 0M729.7 359.6m-2.3 0a2.3 2.3 0 1 0 4.6 0a2.3 2.3 0 1 0 -4.6 0M720.1 365.2m-2.3 0a2.3 2.3 0 1 0 4.6 0a2.3 2.3 0 1 0 -4.6 0M710.5 370.8m-2.3 0a2.3 2.3 0 1 0 4.6 0a2.3 2.3 0 1 0 -4.6 0M700.8 376.5m-2.3 0a2.3 2.3 0 1 0 4.6 0a2.3 2.3 0 1 0 -4.6 0M691 382.2m-2.3 0a2.3 2.3 0 1 0 4.6 0a2.3 2.3 0 1 0 -4.6 0M681.1 388m-2.3 0a2.3 2.3 0 1 0 4.6 0a2.3 2.3 0 1 0 -4.6 0M671.1 393.8m-2.3 0a2.3 2.3 0 1 0 4.6 0a2.3 2.3 0 1 0 -4.6 0M661 399.7m-2.3 0a2.3 2.3 0 1 0 4.6 0a2.3 2.3 0 1 0 -4.6 0M650.8 405.6m-2.3 0a2.3 2.3 0 1 0 4.6 0a2.3 2.3 0 1 0 -4.6 0M468.8 526.1m-2.3 0a2.3 2.3 0 1 0 4.6 0a2.3 2.3 0 1 0 -4.6 0M480.8 519.1m-2.3 0a2.3 2.3 0 1 0 4.6 0a2.3 2.3 0 1 0 -4.6 0M492.6 512.1m-2.3 0a2.3 2.3 0 1 0 4.6 0a2.3 2.3 0 1 0 -4.6 0M504.3 505.2m-2.3 0a2.3 2.3 0 1 0 4.6 0a2.3 2.3 0 1 0 -4.6 0M515.9 498.4m-2.3 0a2.3 2.3 0 1 0 4.6 0a2.3 2.3 0 1 0 -4.6 0M527.4 491.6m-2.3 0a2.3 2.3 0 1 0 4.6 0a2.3 2.3 0 1 0 -4.6 0M538.8 484.9m-2.3 0a2.3 2.3 0 1 0 4.6 0a2.3 2.3 0 1 0 -4.6 0M550.1 478.2m-2.3 0a2.3 2.3 0 1 0 4.6 0a2.3 2.3 0 1 0 -4.6 0M561.3 471.7m-2.3 0a2.3 2.3 0 1 0 4.6 0a2.3 2.3 0 1 0 -4.6 0M572.4 465.1m-2.3 0a2.3 2.3 0 1 0 4.6 0a2.3 2.3 0 1 0 -4.6 0M583.3 458.7m-2.3 0a2.3 2.3 0 1 0 4.6 0a2.3 2.3 0 1 0 -4.6 0M594.2 452.3m-2.3 0a2.3 2.3 0 1 0 4.6 0a2.3 2.3 0 1 0 -4.6 0M605 445.9m-2.3 0a2.3 2.3 0 1 0 4.6 0a2.3 2.3 0 1 0 -4.6 0M615.7 439.6m-2.3 0a2.3 2.3 0 1 0 4.6 0a2.3 2.3 0 1 0 -4.6 0M626.2 433.4m-2.3 0a2.3 2.3 0 1 0 4.6 0a2.3 2.3 0 1 0 -4.6 0M636.7 427.2m-2.3 0a2.3 2.3 0 1 0 4.6 0a2.3 2.3 0 1 0 -4.6 0M804.4 328.4m-2.3 0a2.3 2.3 0 1 0 4.6 0a2.3 2.3 0 1 0 -4.6 0M795.4 333.7m-2.3 0a2.3 2.3 0 1 0 4.6 0a2.3 2.3 0 1 0 -4.6 0M786.3 339m-2.3 0a2.3 2.3 0 1 0 4.6 0a2.3 2.3 0 1 0 -4.6 0M777.2 344.4m-2.3 0a2.3 2.3 0 1 0 4.6 0a2.3 2.3 0 1 0 -4.6 0M767.9 349.9m-2.3 0a2.3 2.3 0 1 0 4.6 0a2.3 2.3 0 1 0 -4.6 0M758.6 355.4m-2.3 0a2.3 2.3 0 1 0 4.6 0a2.3 2.3 0 1 0 -4.6 0M749.2 360.9m-2.3 0a2.3 2.3 0 1 0 4.6 0a2.3 2.3 0 1 0 -4.6 0M739.7 366.5m-2.3 0a2.3 2.3 0 1 0 4.6 0a2.3 2.3 0 1 0 -4.6 0M730.2 372.1m-2.3 0a2.3 2.3 0 1 0 4.6 0a2.3 2.3 0 1 0 -4.6 0M720.5 377.8m-2.3 0a2.3 2.3 0 1 0 4.6 0a2.3 2.3 0 1 0 -4.6 0M710.8 383.6m-2.3 0a2.3 2.3 0 1 0 4.6 0a2.3 2.3 0 1 0 -4.6 0M701 389.3m-2.3 0a2.3 2.3 0 1 0 4.6 0a2.3 2.3 0 1 0 -4.6 0M691.1 395.2m-2.3 0a2.3 2.3 0 1 0 4.6 0a2.3 2.3 0 1 0 -4.6 0M681.1 401.1m-2.3 0a2.3 2.3 0 1 0 4.6 0a2.3 2.3 0 1 0 -4.6 0M671 407m-2.3 0a2.3 2.3 0 1 0 4.6 0a2.3 2.3 0 1 0 -4.6 0M660.8 413m-2.3 0a2.3 2.3 0 1 0 4.6 0a2.3 2.3 0 1 0 -4.6 0M478.6 534.9m-2.3 0a2.3 2.3 0 1 0 4.6 0a2.3 2.3 0 1 0 -4.6 0M490.6 527.8m-2.3 0a2.3 2.3 0 1 0 4.6 0a2.3 2.3 0 1 0 -4.6 0M502.4 520.7m-2.3 0a2.3 2.3 0 1 0 4.6 0a2.3 2.3 0 1 0 -4.6 0M514.2 513.8m-2.3 0a2.3 2.3 0 1 0 4.6 0a2.3 2.3 0 1 0 -4.6 0M525.8 506.8m-2.3 0a2.3 2.3 0 1 0 4.6 0a2.3 2.3 0 1 0 -4.6 0M537.3 500m-2.3 0a2.3 2.3 0 1 0 4.6 0a2.3 2.3 0 1 0 -4.6 0M548.7 493.2m-2.3 0a2.3 2.3 0 1 0 4.6 0a2.3 2.3 0 1 0 -4.6 0M560 486.5m-2.3 0a2.3 2.3 0 1 0 4.6 0a2.3 2.3 0 1 0 -4.6 0M571.2 479.8m-2.3 0a2.3 2.3 0 1 0 4.6 0a2.3 2.3 0 1 0 -4.6 0M582.3 473.2m-2.3 0a2.3 2.3 0 1 0 4.6 0a2.3 2.3 0 1 0 -4.6 0M593.3 466.6m-2.3 0a2.3 2.3 0 1 0 4.6 0a2.3 2.3 0 1 0 -4.6 0M604.2 460.2m-2.3 0a2.3 2.3 0 1 0 4.6 0a2.3 2.3 0 1 0 -4.6 0M615 453.7m-2.3 0a2.3 2.3 0 1 0 4.6 0a2.3 2.3 0 1 0 -4.6 0M625.7 447.4m-2.3 0a2.3 2.3 0 1 0 4.6 0a2.3 2.3 0 1 0 -4.6 0M636.3 441.1m-2.3 0a2.3 2.3 0 1 0 4.6 0a2.3 2.3 0 1 0 -4.6 0M646.8 434.8m-2.3 0a2.3 2.3 0 1 0 4.6 0a2.3 2.3 0 1 0 -4.6 0M814.6 334.9m-2.3 0a2.3 2.3 0 1 0 4.6 0a2.3 2.3 0 1 0 -4.6 0M805.6 340.3m-2.3 0a2.3 2.3 0 1 0 4.6 0a2.3 2.3 0 1 0 -4.6 0M796.5 345.7m-2.3 0a2.3 2.3 0 1 0 4.6 0a2.3 2.3 0 1 0 -4.6 0M787.3 351.2m-2.3 0a2.3 2.3 0 1 0 4.6 0a2.3 2.3 0 1 0 -4.6 0M778.1 356.7m-2.3 0a2.3 2.3 0 1 0 4.6 0a2.3 2.3 0 1 0 -4.6 0M768.8 362.2m-2.3 0a2.3 2.3 0 1 0 4.6 0a2.3 2.3 0 1 0 -4.6 0M759.4 367.8m-2.3 0a2.3 2.3 0 1 0 4.6 0a2.3 2.3 0 1 0 -4.6 0M749.9 373.5m-2.3 0a2.3 2.3 0 1 0 4.6 0a2.3 2.3 0 1 0 -4.6 0M740.3 379.2m-2.3 0a2.3 2.3 0 1 0 4.6 0a2.3 2.3 0 1 0 -4.6 0M730.6 384.9m-2.3 0a2.3 2.3 0 1 0 4.6 0a2.3 2.3 0 1 0 -4.6 0M720.9 390.7m-2.3 0a2.3 2.3 0 1 0 4.6 0a2.3 2.3 0 1 0 -4.6 0M711.1 396.6m-2.3 0a2.3 2.3 0 1 0 4.6 0a2.3 2.3 0 1 0 -4.6 0M701.2 402.5m-2.3 0a2.3 2.3 0 1 0 4.6 0a2.3 2.3 0 1 0 -4.6 0M691.1 408.4m-2.3 0a2.3 2.3 0 1 0 4.6 0a2.3 2.3 0 1 0 -4.6 0M681.1 414.4m-2.3 0a2.3 2.3 0 1 0 4.6 0a2.3 2.3 0 1 0 -4.6 0M670.9 420.5m-2.3 0a2.3 2.3 0 1 0 4.6 0a2.3 2.3 0 1 0 -4.6 0M488.5 543.8m-2.3 0a2.3 2.3 0 1 0 4.6 0a2.3 2.3 0 1 0 -4.6 0M500.5 536.6m-2.3 0a2.3 2.3 0 1 0 4.6 0a2.3 2.3 0 1 0 -4.6 0M512.3 529.5m-2.3 0a2.3 2.3 0 1 0 4.6 0a2.3 2.3 0 1 0 -4.6 0M524.1 522.4m-2.3 0a2.3 2.3 0 1 0 4.6 0a2.3 2.3 0 1 0 -4.6 0M535.8 515.4m-2.3 0a2.3 2.3 0 1 0 4.6 0a2.3 2.3 0 1 0 -4.6 0M547.3 508.4m-2.3 0a2.3 2.3 0 1 0 4.6 0a2.3 2.3 0 1 0 -4.6 0M558.7 501.6m-2.3 0a2.3 2.3 0 1 0 4.6 0a2.3 2.3 0 1 0 -4.6 0M570.1 494.8m-2.3 0a2.3 2.3 0 1 0 4.6 0a2.3 2.3 0 1 0 -4.6 0M581.3 488m-2.3 0a2.3 2.3 0 1 0 4.6 0a2.3 2.3 0 1 0 -4.6 0M592.4 481.3m-2.3 0a2.3 2.3 0 1 0 4.6 0a2.3 2.3 0 1 0 -4.6 0M603.4 474.7m-2.3 0a2.3 2.3 0 1 0 4.6 0a2.3 2.3 0 1 0 -4.6 0M614.3 468.2m-2.3 0a2.3 2.3 0 1 0 4.6 0a2.3 2.3 0 1 0 -4.6 0M625.1 461.7m-2.3 0a2.3 2.3 0 1 0 4.6 0a2.3 2.3 0 1 0 -4.6 0M635.8 455.2m-2.3 0a2.3 2.3 0 1 0 4.6 0a2.3 2.3 0 1 0 -4.6 0M646.4 448.9m-2.3 0a2.3 2.3 0 1 0 4.6 0a2.3 2.3 0 1 0 -4.6 0M656.9 442.5m-2.3 0a2.3 2.3 0 1 0 4.6 0a2.3 2.3 0 1 0 -4.6 0M824.9 341.5m-2.3 0a2.3 2.3 0 1 0 4.6 0a2.3 2.3 0 1 0 -4.6 0M815.9 347m-2.3 0a2.3 2.3 0 1 0 4.6 0a2.3 2.3 0 1 0 -4.6 0M806.8 352.4m-2.3 0a2.3 2.3 0 1 0 4.6 0a2.3 2.3 0 1 0 -4.6 0M797.6 357.9m-2.3 0a2.3 2.3 0 1 0 4.6 0a2.3 2.3 0 1 0 -4.6 0M788.4 363.5m-2.3 0a2.3 2.3 0 1 0 4.6 0a2.3 2.3 0 1 0 -4.6 0M779 369.1m-2.3 0a2.3 2.3 0 1 0 4.6 0a2.3 2.3 0 1 0 -4.6 0M769.6 374.8m-2.3 0a2.3 2.3 0 1 0 4.6 0a2.3 2.3 0 1 0 -4.6 0M760.1 380.5m-2.3 0a2.3 2.3 0 1 0 4.6 0a2.3 2.3 0 1 0 -4.6 0M750.5 386.3m-2.3 0a2.3 2.3 0 1 0 4.6 0a2.3 2.3 0 1 0 -4.6 0M740.9 392.1m-2.3 0a2.3 2.3 0 1 0 4.6 0a2.3 2.3 0 1 0 -4.6 0M731.1 397.9m-2.3 0a2.3 2.3 0 1 0 4.6 0a2.3 2.3 0 1 0 -4.6 0M721.3 403.8m-2.3 0a2.3 2.3 0 1 0 4.6 0a2.3 2.3 0 1 0 -4.6 0M711.4 409.8m-2.3 0a2.3 2.3 0 1 0 4.6 0a2.3 2.3 0 1 0 -4.6 0M701.4 415.8m-2.3 0a2.3 2.3 0 1 0 4.6 0a2.3 2.3 0 1 0 -4.6 0M691.2 421.9m-2.3 0a2.3 2.3 0 1 0 4.6 0a2.3 2.3 0 1 0 -4.6 0M681.1 428m-2.3 0a2.3 2.3 0 1 0 4.6 0a2.3 2.3 0 1 0 -4.6 0M498.5 552.8m-2.3 0a2.3 2.3 0 1 0 4.6 0a2.3 2.3 0 1 0 -4.6 0M510.5 545.5m-2.3 0a2.3 2.3 0 1 0 4.6 0a2.3 2.3 0 1 0 -4.6 0M522.4 538.3m-2.3 0a2.3 2.3 0 1 0 4.6 0a2.3 2.3 0 1 0 -4.6 0M534.2 531.1m-2.3 0a2.3 2.3 0 1 0 4.6 0a2.3 2.3 0 1 0 -4.6 0M545.8 524m-2.3 0a2.3 2.3 0 1 0 4.6 0a2.3 2.3 0 1 0 -4.6 0M557.4 517m-2.3 0a2.3 2.3 0 1 0 4.6 0a2.3 2.3 0 1 0 -4.6 0M568.9 510.1m-2.3 0a2.3 2.3 0 1 0 4.6 0a2.3 2.3 0 1 0 -4.6 0M580.2 503.2m-2.3 0a2.3 2.3 0 1 0 4.6 0a2.3 2.3 0 1 0 -4.6 0M591.4 496.4m-2.3 0a2.3 2.3 0 1 0 4.6 0a2.3 2.3 0 1 0 -4.6 0M602.6 489.6m-2.3 0a2.3 2.3 0 1 0 4.6 0a2.3 2.3 0 1 0 -4.6 0M613.6 482.9m-2.3 0a2.3 2.3 0 1 0 4.6 0a2.3 2.3 0 1 0 -4.6 0M624.5 476.3m-2.3 0a2.3 2.3 0 1 0 4.6 0a2.3 2.3 0 1 0 -4.6 0M635.3 469.7m-2.3 0a2.3 2.3 0 1 0 4.6 0a2.3 2.3 0 1 0 -4.6 0M646 463.2m-2.3 0a2.3 2.3 0 1 0 4.6 0a2.3 2.3 0 1 0 -4.6 0M656.7 456.7m-2.3 0a2.3 2.3 0 1 0 4.6 0a2.3 2.3 0 1 0 -4.6 0M667.2 450.4m-2.3 0a2.3 2.3 0 1 0 4.6 0a2.3 2.3 0 1 0 -4.6 0M835.3 348.2m-2.3 0a2.3 2.3 0 1 0 4.6 0a2.3 2.3 0 1 0 -4.6 0M826.3 353.7m-2.3 0a2.3 2.3 0 1 0 4.6 0a2.3 2.3 0 1 0 -4.6 0M817.2 359.2m-2.3 0a2.3 2.3 0 1 0 4.6 0a2.3 2.3 0 1 0 -4.6 0M808 364.8m-2.3 0a2.3 2.3 0 1 0 4.6 0a2.3 2.3 0 1 0 -4.6 0M798.7 370.4m-2.3 0a2.3 2.3 0 1 0 4.6 0a2.3 2.3 0 1 0 -4.6 0M789.4 376.1m-2.3 0a2.3 2.3 0 1 0 4.6 0a2.3 2.3 0 1 0 -4.6 0M780 381.8m-2.3 0a2.3 2.3 0 1 0 4.6 0a2.3 2.3 0 1 0 -4.6 0M770.5 387.6m-2.3 0a2.3 2.3 0 1 0 4.6 0a2.3 2.3 0 1 0 -4.6 0M760.9 393.4m-2.3 0a2.3 2.3 0 1 0 4.6 0a2.3 2.3 0 1 0 -4.6 0M751.2 399.3m-2.3 0a2.3 2.3 0 1 0 4.6 0a2.3 2.3 0 1 0 -4.6 0M741.5 405.2m-2.3 0a2.3 2.3 0 1 0 4.6 0a2.3 2.3 0 1 0 -4.6 0M731.6 411.2m-2.3 0a2.3 2.3 0 1 0 4.6 0a2.3 2.3 0 1 0 -4.6 0M721.7 417.2m-2.3 0a2.3 2.3 0 1 0 4.6 0a2.3 2.3 0 1 0 -4.6 0M711.7 423.3m-2.3 0a2.3 2.3 0 1 0 4.6 0a2.3 2.3 0 1 0 -4.6 0M701.6 429.5m-2.3 0a2.3 2.3 0 1 0 4.6 0a2.3 2.3 0 1 0 -4.6 0M691.3 435.7m-2.3 0a2.3 2.3 0 1 0 4.6 0a2.3 2.3 0 1 0 -4.6 0" fill="#fff" stroke="#111" stroke-width="1"/>
<path d="M44.4 683.1V654.3M44.4 683.1L72.6 667.9M44.4 683.1L67.9 701.4" stroke="#5e5e5e" stroke-width="1.2" fill="none"/>
<text x="46.5" y="655.8" font-family="Liberation Sans" font-size="15" fill="#5e5e5e">z</text>
<text x="75.3" y="668" font-family="Liberation Sans" font-size="15" fill="#5e5e5e">y</text>
<text x="70.3" y="703.2" font-family="Liberation Sans" font-size="15" fill="#5e5e5e">x</text>
<path d="M0 0H114V16.5Q114 19.4 111 19.4H0Z" fill="#8aa0ee"/>
<text x="10.3" y="12.8" font-family="Liberation Sans" font-weight="bold" font-size="14" fill="#262626">Perspective</text>
<path d="M100.5 0V18.8" stroke="#222" stroke-width="1.2"/>
<path d="M102.1 5H110.9L106.5 10Z" fill="#333"/>
</svg></div>
<div style="position:absolute;left:938px;top:0px;width:854px;height:718px;background:#eaebef"></div>
<div style="position:absolute;left:938px;top:0px;width:1px;height:718px;background:#cfd3da"></div>
<div style="position:absolute;left:949.5px;top:2.8px;font-family:'Liberation Sans',sans-serif;font-size:14.4px;line-height:1;color:#6e6e6e;white-space:pre;">Pollination.Panel</div>
<div style="position:absolute;left:1063px;top:9px;width:729px;height:1px;background:#c9cfdc"></div>
<div style="position:absolute;left:1063px;top:10px;width:729px;height:1px;background:#f6f7fa"></div>
<div style="position:absolute;left:947px;top:48px;width:845px;height:1px;background:#c3cad9"></div>
<div style="position:absolute;left:1298px;top:21px;width:44px;height:28px;border:1px solid #c3cad9;border-bottom:none;background:#eceef2;box-sizing:border-box"></div>
<div style="position:absolute;left:947px;top:48px;width:1px;height:670px;background:#c3cad9"></div>
<div style="position:absolute;left:948px;top:49px;width:844px;height:669px;background:#f0f0f0"></div>
<div style="position:absolute;left:964px;top:51px;width:189px;height:26px;border:1px solid #2fa9e1;border-bottom:none;border-radius:5px 5px 0 0;background:#f6f7fc"></div>
<div style="position:absolute;left:971.0px;top:58.1px;font-family:'Liberation Sans',sans-serif;font-size:15.2px;line-height:1;color:#000;white-space:pre;">Pollination Cloud App</div>
<svg style="position:absolute;left:1128.0px;top:53.8px" width="22" height="22" viewBox="-11 -11 22 22"><circle r="9.8" fill="#2fa9e1"/><circle r="7.2" fill="none" stroke="#fff" stroke-width="1"/><path d="M-3 -3L3 3M3 -3L-3 3" stroke="#fff" stroke-width="1.2"/></svg>
<svg style="position:absolute;left:1160.8px;top:53.2px" width="22" height="22" viewBox="-11 -11 22 22"><circle r="9.8" fill="#2fa9e1"/><circle r="7.2" fill="none" stroke="#fff" stroke-width="1"/><path d="M-3.3 0H3.3M0 -3.3V3.3" stroke="#fff" stroke-width="2"/></svg>
<div style="position:absolute;left:960px;top:77px;width:832px;height:641px;background:#fff;border-top:1px solid #a6a6a6;border-left:1px solid #a6a6a6;box-sizing:border-box"></div>
<div style="position:absolute;left:964px;top:81px;width:828px;height:5px;background:#2fa9e1"></div>
<div style="position:absolute;left:968px;top:124px;width:824px;height:2px;background:#2fa9e1"></div>
<svg style="position:absolute;left:968px;top:90px" width="28" height="28" viewBox="-14 -14 28 28"><circle r="13.9" fill="#2fa9e1"/><path d="M-10 1L0 -9L10 1H7V9H2V3H-2V9H-7V1Z" fill="#fff"/></svg>
<svg style="position:absolute;left:1004px;top:90px" width="28" height="28" viewBox="-14 -14 28 28"><circle r="13.9" fill="#2fa9e1"/><path d="M-6 0L5 -7V7Z" fill="none" stroke="#fff" stroke-width="1.8" stroke-linejoin="round"/></svg>
<svg style="position:absolute;left:1040px;top:90px" width="28" height="28" viewBox="-14 -14 28 28"><circle r="13.9" fill="#9d9d9d"/><path d="M6 0L-5 -7V7Z" fill="none" stroke="#fff" stroke-width="1.8" stroke-linejoin="round"/></svg>
<svg style="position:absolute;left:1076px;top:90px" width="28" height="28" viewBox="-14 -14 28 28"><circle r="13.9" fill="#2fa9e1"/><circle r="10" fill="none" stroke="#fff" stroke-width="1.3"/><clipPath id="gc"><circle r="9.4"/></clipPath><path clip-path="url(#gc)" d="M-10 -4.6H10M-10 0H10M-10 4.6H10M-4.6 -10V10M0 -10V10M4.6 -10V10" stroke="#fff" stroke-width="1.3"/></svg>
<svg style="position:absolute;left:1112px;top:90px" width="28" height="28" viewBox="-14 -14 28 28"><circle r="13.9" fill="#2fa9e1"/><path d="M7.5 -3.5A8.25 8.25 0 1 0 5.3 6.3" fill="none" stroke="#fff" stroke-width="3.4"/><path d="M3.6 -1.4L12.8 0L9 4.4Z" fill="#fff"/></svg>
<svg style="position:absolute;left:1148px;top:90px" width="28" height="28" viewBox="-14 -14 28 28"><circle r="13.9" fill="#2fa9e1"/><rect x="-7.1" y="-7.1" width="14.2" height="14.2" rx="1.5" fill="none" stroke="#fff" stroke-width="1.2"/><rect x="-4.1" y="-4.1" width="8.2" height="8.2" fill="none" stroke="#fff" stroke-width="1.5"/><path d="M-4.3 -10.4V-7.7M-1.5 -10.4V-7.7M1.3 -10.4V-7.7M4.1 -10.4V-7.7M-4.3 7.7V10.4M-1.5 7.7V10.4M1.3 7.7V10.4M4.1 7.7V10.4M-10.4 -4.3H-7.7M-10.4 -1.5H-7.7M-10.4 1.3H-7.7M-10.4 4.1H-7.7M7.7 -4.3H10.4M7.7 -1.5H10.4M7.7 1.3H10.4M7.7 4.1H10.4" stroke="#fff" stroke-width="1.2"/></svg>
<svg style="position:absolute;left:1184px;top:90px" width="28" height="28" viewBox="-14 -14 28 28"><circle r="13.9" fill="#9d9d9d"/><ellipse cx="0" cy="1" rx="6" ry="8" fill="none" stroke="#fff" stroke-width="1.5"/><path d="M-6 -3H6M0 -3V9M-6 -2L-9 -5M6 -2L9 -5M-6 3L-9 3M6 3L9 3M-5 7L-8 9M5 7L8 9" stroke="#fff" stroke-width="1.2"/></svg>
<svg style="position:absolute;left:1220px;top:90px" width="28" height="28" viewBox="-14 -14 28 28"><circle r="13.9" fill="#2fa9e1"/><circle cx="-5" cy="0" r="4" fill="none" stroke="#fff" stroke-width="1.6"/><circle cx="-6" cy="0" r="1" fill="#fff"/><path d="M-1 -1.5H10L11 0L10 1.5H8L7 3L6 1.5L5 3L4 1.5H-1Z" fill="none" stroke="#fff" stroke-width="1.2"/></svg>
<div style="position:absolute;left:1258px;top:92px;width:540px;height:28px;border:1px solid #a6a6a6;box-sizing:border-box;background:#fff"></div>
<div style="position:absolute;left:1262.0px;top:96.4px;font-family:'Liberation Sans',sans-serif;font-size:16.15px;line-height:1;color:#000;white-space:pre;">https://app.pollination.cloud/antonellodinunzio/new/study</div>
<div style="position:absolute;left:964px;top:126px;width:828px;height:592px;background:#fdf9f0"></div>
<div style="position:absolute;left:984px;top:126px;width:153px;height:5px;background:#fff;border-left:1px solid #a6a6a6;border-right:1px solid #a6a6a6;box-sizing:border-box"></div>
<div style="position:absolute;left:1137px;top:130px;width:655px;height:1px;background:#a8a8a8"></div>
<div style="position:absolute;left:984px;top:143px;width:820px;height:600px;background:#fff;border:1px solid #e4e4e4;border-radius:7px;box-sizing:border-box"></div><div style="position:absolute;left:1014.5px;top:175.3px;font-family:'Liberation Sans',sans-serif;font-size:16px;line-height:1;color:#ff0000;white-space:pre;letter-spacing:0.1px">Ddy must have required property 'ddy'.</div>
<svg style="position:absolute;left:1301.0px;top:174.8px" width="15" height="15" viewBox="-8 -8 16 16"><circle r="7" fill="none" stroke="#ff0000" stroke-width="1.1"/><path d="M0.9 -4.3h0.1M0.6 -2L-0.6 4" stroke="#ff0000" stroke-width="1.5" stroke-linecap="round"/></svg>
<div style="position:absolute;left:1010px;top:194px;width:183px;height:52px;background:#1890ff;border-radius:4px;overflow:hidden"><div style="position:absolute;left:0.0px;top:0;width:94.0px;height:52px;background:#1789f6;box-shadow:inset 0 0 10px 2px rgba(0,60,160,0.5)"></div><div style="position:absolute;left:94.0px;top:0;width:89.0px;height:52px;"></div></div>
<div style="position:absolute;left:1104px;top:194px;width:1px;height:52px;background:#4da8ff"></div>
<svg style="position:absolute;left:1020.0px;top:208.0px" width="24" height="24" viewBox="-12.0 -12.0 24 24"><path d="M-4.5 5.5H5A3.3 3.3 0 0 0 5.5 -1A5 5 0 0 0 -4.5 -1.5A3.5 3.5 0 0 0 -4.5 5.5Z" fill="none" stroke="#fff" stroke-width="1.2"/><path d="M0 -0.5V3.5M-2 1.5H2" stroke="#fff" stroke-width="1.2"/></svg>
<div style="position:absolute;left:1048.5px;top:212.5px;font-family:'Liberation Sans',sans-serif;font-size:16px;line-height:1;color:#fff;white-space:pre;">Cloud</div>
<svg style="position:absolute;left:1113.0px;top:208.0px" width="24" height="24" viewBox="-12.0 -12.0 24 24"><rect x="-6" y="-5" width="12" height="8.5" fill="none" stroke="#fff" stroke-width="1.3"/><path d="M-7.5 5.5H7.5" stroke="#fff" stroke-width="1.5"/></svg>
<div style="position:absolute;left:1143.0px;top:212.5px;font-family:'Liberation Sans',sans-serif;font-size:16px;line-height:1;color:#fff;white-space:pre;letter-spacing:-0.65px">Local</div>
<div style="position:absolute;left:1010px;top:256px;width:759px;height:51.5px;background:#1890ff;border-radius:4px"></div>
<div style="position:absolute;left:1720px;top:256px;width:1px;height:51.5px;background:#40a2ff"></div>
<svg style="position:absolute;left:1022.2px;top:267.5px" width="28" height="28" viewBox="-14.0 -14.0 28 28"><path d="M-6 7H6.5A4.3 4.3 0 0 0 7 -1.5A6.8 6.8 0 0 0 -6 -2A4.5 4.5 0 0 0 -6 7Z" fill="none" stroke="#fff" stroke-width="1.5"/><path d="M0.5 -1.5V5M-2.8 1.8H3.8" stroke="#fff" stroke-width="1.5"/></svg>
<div style="position:absolute;left:1062.5px;top:274.9px;font-family:'Liberation Sans',sans-serif;font-size:15.6px;line-height:1;color:#fff;white-space:pre;">Search for something...</div>
<svg style="position:absolute;left:1734.5px;top:273.0px" width="20" height="20" viewBox="-10.0 -10.0 20 20"><path d="M0 -8V8M-6 2L0 8L6 2" fill="none" stroke="#fff" stroke-width="1.6"/></svg>
<div style="position:absolute;left:1014.5px;top:336.3px;font-family:'Liberation Sans',sans-serif;font-size:16px;line-height:1;color:#ff0000;white-space:pre;letter-spacing:0.05px">Epw must have required property 'epw'.</div>
<svg style="position:absolute;left:1305.5px;top:335.8px" width="15" height="15" viewBox="-8 -8 16 16"><circle r="7" fill="none" stroke="#ff0000" stroke-width="1.1"/><path d="M0.9 -4.3h0.1M0.6 -2L-0.6 4" stroke="#ff0000" stroke-width="1.5" stroke-linecap="round"/></svg>
<div style="position:absolute;left:1010px;top:355px;width:183px;height:52px;background:#1890ff;border-radius:4px;overflow:hidden"><div style="position:absolute;left:0.0px;top:0;width:94.0px;height:52px;background:#1789f6;box-shadow:inset 0 0 10px 2px rgba(0,60,160,0.5)"></div><div style="position:absolute;left:94.0px;top:0;width:89.0px;height:52px;"></div></div>
<div style="position:absolute;left:1104px;top:355px;width:1px;height:52px;background:#4da8ff"></div>
<svg style="position:absolute;left:1020.0px;top:369.0px" width="24" height="24" viewBox="-12.0 -12.0 24 24"><path d="M-4.5 5.5H5A3.3 3.3 0 0 0 5.5 -1A5 5 0 0 0 -4.5 -1.5A3.5 3.5 0 0 0 -4.5 5.5Z" fill="none" stroke="#fff" stroke-width="1.2"/><path d="M0 -0.5V3.5M-2 1.5H2" stroke="#fff" stroke-width="1.2"/></svg>
<div style="position:absolute;left:1048.5px;top:373.5px;font-family:'Liberation Sans',sans-serif;font-size:16px;line-height:1;color:#fff;white-space:pre;">Cloud</div>
<svg style="position:absolute;left:1113.0px;top:369.0px" width="24" height="24" viewBox="-12.0 -12.0 24 24"><rect x="-6" y="-5" width="12" height="8.5" fill="none" stroke="#fff" stroke-width="1.3"/><path d="M-7.5 5.5H7.5" stroke="#fff" stroke-width="1.5"/></svg>
<div style="position:absolute;left:1143.0px;top:373.5px;font-family:'Liberation Sans',sans-serif;font-size:16px;line-height:1;color:#fff;white-space:pre;letter-spacing:-0.65px">Local</div>
<div style="position:absolute;left:1010px;top:417.5px;width:759px;height:51.5px;background:#1890ff;border-radius:4px"></div>
<div style="position:absolute;left:1720px;top:417.5px;width:1px;height:51.5px;background:#40a2ff"></div>
<svg style="position:absolute;left:1022.2px;top:429.0px" width="28" height="28" viewBox="-14.0 -14.0 28 28"><path d="M-6 7H6.5A4.3 4.3 0 0 0 7 -1.5A6.8 6.8 0 0 0 -6 -2A4.5 4.5 0 0 0 -6 7Z" fill="none" stroke="#fff" stroke-width="1.5"/><path d="M0.5 -1.5V5M-2.8 1.8H3.8" stroke="#fff" stroke-width="1.5"/></svg>
<div style="position:absolute;left:1062.5px;top:436.4px;font-family:'Liberation Sans',sans-serif;font-size:15.6px;line-height:1;color:#fff;white-space:pre;">Search for something...</div>
<svg style="position:absolute;left:1734.5px;top:434.5px" width="20" height="20" viewBox="-10.0 -10.0 20 20"><path d="M0 -8V8M-6 2L0 8L6 2" fill="none" stroke="#fff" stroke-width="1.6"/></svg>
<div style="position:absolute;left:1014.5px;top:497.8px;font-family:'Liberation Sans',sans-serif;font-size:16px;line-height:1;color:#ff0000;white-space:pre;letter-spacing:0.16px">Model must have required property 'model'.</div>
<svg style="position:absolute;left:1337.0px;top:497.5px" width="15" height="15" viewBox="-8 -8 16 16"><circle r="7" fill="none" stroke="#ff0000" stroke-width="1.1"/><path d="M0.9 -4.3h0.1M0.6 -2L-0.6 4" stroke="#ff0000" stroke-width="1.5" stroke-linecap="round"/></svg>
<div style="position:absolute;left:1010px;top:517.5px;width:266px;height:52px;background:#1890ff;border-radius:4px;overflow:hidden"><div style="position:absolute;left:0.0px;top:0;width:94.5px;height:52px;"></div><div style="position:absolute;left:94.5px;top:0;width:83.0px;height:52px;background:#1789f6;box-shadow:inset 0 0 10px 2px rgba(0,60,160,0.5)"></div><div style="position:absolute;left:177.5px;top:0;width:88.5px;height:52px;"></div></div>
<div style="position:absolute;left:1104.5px;top:517.5px;width:1px;height:52px;background:#4da8ff"></div>
<div style="position:absolute;left:1187.5px;top:517.5px;width:1px;height:52px;background:#4da8ff"></div>
<svg style="position:absolute;left:1020.0px;top:531.5px" width="24" height="24" viewBox="-12.0 -12.0 24 24"><path d="M-4.5 5.5H5A3.3 3.3 0 0 0 5.5 -1A5 5 0 0 0 -4.5 -1.5A3.5 3.5 0 0 0 -4.5 5.5Z" fill="none" stroke="#fff" stroke-width="1.2"/><path d="M0 -0.5V3.5M-2 1.5H2" stroke="#fff" stroke-width="1.2"/></svg>
<div style="position:absolute;left:1048.5px;top:536.0px;font-family:'Liberation Sans',sans-serif;font-size:16px;line-height:1;color:#fff;white-space:pre;">Cloud</div>
<svg style="position:absolute;left:1113.0px;top:531.0px" width="24" height="24" viewBox="-12.0 -12.0 24 24"><rect x="-7.5" y="-7.5" width="15" height="15" rx="1" fill="none" stroke="#fff" stroke-width="1.3"/><path d="M0 4V-3.5M-3 -0.5L0 -3.5L3 -0.5" fill="none" stroke="#fff" stroke-width="1.3"/></svg>
<div style="position:absolute;left:1142.2px;top:536.0px;font-family:'Liberation Sans',sans-serif;font-size:16px;line-height:1;color:#fff;white-space:pre;letter-spacing:-1px">CAD</div>
<svg style="position:absolute;left:1197.0px;top:531.5px" width="24" height="24" viewBox="-12.0 -12.0 24 24"><rect x="-6" y="-5" width="12" height="8.5" fill="none" stroke="#fff" stroke-width="1.3"/><path d="M-7.5 5.5H7.5" stroke="#fff" stroke-width="1.5"/></svg>
<div style="position:absolute;left:1226.0px;top:536.0px;font-family:'Liberation Sans',sans-serif;font-size:16px;line-height:1;color:#fff;white-space:pre;letter-spacing:-0.65px">Local</div>
<div style="position:absolute;left:1010px;top:579px;width:275px;height:52px;background:#1890ff;border-radius:4px;overflow:hidden"><div style="position:absolute;left:0.0px;top:0;width:136.2px;height:52px;"></div><div style="position:absolute;left:136.2px;top:0;width:46.1px;height:52px;"></div><div style="position:absolute;left:182.3px;top:0;width:46.2px;height:52px;"></div><div style="position:absolute;left:228.5px;top:0;width:46.5px;height:52px;"></div></div>
<div style="position:absolute;left:1146.2px;top:579px;width:1px;height:52px;background:#4da8ff"></div>
<div style="position:absolute;left:1192.3px;top:579px;width:1px;height:52px;background:#4da8ff"></div>
<div style="position:absolute;left:1238.5px;top:579px;width:1px;height:52px;background:#4da8ff"></div>
<svg style="position:absolute;left:1022.0px;top:587.6px" width="34" height="34" viewBox="-17.0 -17.0 34 34"><g transform="translate(0 0)"><circle cx="-7.4" cy="0" r="6.5" fill="#2ca7df" stroke="#fff" stroke-width="0.9"/><circle cx="0" cy="7.4" r="6.5" fill="#f0b04a" stroke="#fff" stroke-width="0.9"/><circle cx="7.4" cy="0" r="6.5" fill="#e8262c" stroke="#fff" stroke-width="0.9"/><circle cx="0" cy="-7.4" r="6.5" fill="#10a14a" stroke="#fff" stroke-width="0.9"/><circle cx="-4.514" cy="0" r="1.95" fill="#fff"/><circle cx="0" cy="4.514" r="1.95" fill="#fff"/><circle cx="4.514" cy="0" r="1.95" fill="#fff"/><circle cx="0" cy="-4.514" r="1.95" fill="#fff"/></g></svg>
<div style="position:absolute;left:1062.8px;top:598.7px;font-family:'Liberation Sans',sans-serif;font-size:16px;line-height:1;color:#fff;white-space:pre;letter-spacing:-0.35px">Get Model</div>
<svg style="position:absolute;left:1157.0px;top:592.9px" width="24" height="24" viewBox="-12.0 -12.0 24 24"><path d="M-6.6 0.7A6.9 6.9 0 0 1 6.8 -0.7" fill="none" stroke="#fff" stroke-width="1.4"/><path d="M6.6 1.9A6.9 6.9 0 0 1 -6.8 0.7" fill="none" stroke="#fff" stroke-width="1.4"/><path d="M4.2 -0.7H9.3L6.8 2.2Z" fill="#fff"/><path d="M-9.6 0.7H-4.5L-7 -2.2Z" fill="#fff"/></svg>
<svg style="position:absolute;left:1203.0px;top:593.0px" width="24" height="24" viewBox="-12.0 -12.0 24 24"><path d="M-7 -7H7V7H-7Z" fill="none" stroke="#fff" stroke-width="1.2"/><rect x="-9.7" y="-9.7" width="5" height="5" fill="#1890ff" stroke="#fff" stroke-width="1.3"/><rect x="4.5" y="-9.7" width="5" height="5" fill="#1890ff" stroke="#fff" stroke-width="1.3"/><rect x="-9.7" y="4.5" width="5" height="5" fill="#1890ff" stroke="#fff" stroke-width="1.3"/><rect x="4.5" y="4.5" width="5" height="5" fill="#1890ff" stroke="#fff" stroke-width="1.3"/></svg>
<svg style="position:absolute;left:1249.0px;top:593.0px" width="24" height="24" viewBox="-12.0 -12.0 24 24"><path d="M-10 0Q0 -13.5 10 0Q0 13.5 -10 0Z" fill="#fff"/><circle r="4.4" fill="#1890ff"/><circle r="3" fill="#fff"/></svg>
<div style="position:absolute;left:1014.5px;top:657.2px;font-family:'Liberation Sans',sans-serif;font-size:15.3px;line-height:1;color:#1890ff;white-space:pre;">Sim par</div>
<svg style="position:absolute;left:1079.0px;top:655.5px" width="15" height="15" viewBox="-8 -8 16 16"><circle r="7" fill="none" stroke="#1890ff" stroke-width="1.1"/><path d="M0.9 -4.3h0.1M0.6 -2L-0.6 4" stroke="#1890ff" stroke-width="1.5" stroke-linecap="round"/></svg>
<div style="position:absolute;left:1010px;top:676px;width:113.5px;height:26.7px;background:#e6f7ff;border:1px solid #1890ff;border-radius:5px;box-sizing:border-box"></div>
<div style="position:absolute;left:1017.8px;top:683.8px;font-family:'Liberation Mono',monospace;font-size:14.7px;line-height:1;color:#1890ff;white-space:pre;">Linked data</div>
<div style="position:absolute;left:1744px;top:655.6px;width:25px;height:15.4px;background:#1890ff;border-radius:8px"></div>
<div style="position:absolute;left:1755px;top:657.3px;width:12.2px;height:12.2px;background:#fff;border-radius:50%"></div><svg style="position:absolute;left:0;top:0;pointer-events:none" width="1792" height="718"><path d="M957.4 26.2L975.7 30.2L975.7 40.7L964.9 45.3L957.4 36.5Z" fill="#1c2d8f" stroke="#000" stroke-width="1.3" stroke-linejoin="round"/><path d="M957.9 27L975.2 30.8L975.2 34L964.8 38.1Z" fill="#ff8a5c"/><path d="M957.9 27L964.8 38.1L964.8 41.5L957.9 32Z" fill="#ff5a1a"/><path d="M964.8 38.1L975.2 34L975.2 36.3L964.8 40.5Z" fill="#dd0000"/><path d="M964.8 40.5L975.2 36.3L975.2 38.5L964.8 43Z" fill="#c8c8c8"/><path d="M957.9 32L964.8 40.5L964.8 43L957.9 35Z" fill="#fff"/><path d="M957.9 35L964.8 43L964.8 44.5L957.9 36.5Z" fill="#6d8cff"/><path d="M1002.6 41.5V31.2Q1002.6 30 1004 30H1007.5L1009 31.5H1016.5Q1017.5 31.5 1017.5 32.7V34.5" fill="#ffe066" stroke="#111" stroke-width="1"/><path d="M1002.6 41.5L1005.5 34.3H1019.7L1017 41.5Z" fill="#f7c531" stroke="#111" stroke-width="1.1" stroke-linejoin="round"/><g transform="translate(1056 36) rotate(-50)"><rect x="-9" y="-3.2" width="17" height="6.4" rx="1" fill="#f2f2f2" stroke="#222" stroke-width="1"/><rect x="1.5" y="-3.2" width="4" height="6.4" fill="#f26a10"/><rect x="8" y="-2" width="2.5" height="4" fill="#ddd" stroke="#222" stroke-width="0.8"/></g><ellipse cx="1099.5" cy="42.5" rx="8" ry="2.3" fill="#999" opacity="0.7"/><defs><radialGradient id="sg" cx="0.35" cy="0.3" r="0.75"><stop offset="0" stop-color="#e8f0ff"/><stop offset="0.3" stop-color="#5b8cf0"/><stop offset="1" stop-color="#0a1ca8"/></radialGradient></defs><circle cx="1097.4" cy="36.6" r="7.4" fill="url(#sg)" stroke="#000" stroke-width="0.9"/><path d="M1094.5 31.5L1099 27.5H1104V26H1108V30.5L1104 33V31.5H1099.5L1097 33Z" fill="#f4f4f4" stroke="#222" stroke-width="0.7"/><rect x="1134.5" y="27.5" width="16.7" height="16.7" fill="#fff" stroke="#222" stroke-width="1.4"/><rect x="1135.3" y="28.3" width="15.1" height="2.2" fill="#5546c8"/><path d="M1136 42V38Q1136 31 1143 31Q1150 31 1150 38V42Z" fill="#4a67dc"/><path d="M1140.5 35Q1141 32.5 1143.5 32.5Q1146 32.5 1145.5 35.5Q1145 37.5 1142.5 40.5" fill="none" stroke="#fff" stroke-width="1.5"/><path d="M1179.5 33Q1179.5 31 1181.5 31H1184L1185.5 29H1190.5L1192 31H1194Q1196 31 1196 33V41Q1196 42.7 1194 42.7H1181.5Q1179.5 42.7 1179.5 41Z" fill="#111"/><circle cx="1188.5" cy="36.7" r="4.3" fill="#1a1a1a" stroke="#bbb" stroke-width="0.9"/><circle cx="1187.5" cy="35.8" r="1.3" fill="#5d87c6"/><circle cx="1190" cy="38" r="1.2" fill="#3f8f3f"/><path d="M1222 34L1225 29L1228 30L1227 33Z" fill="#2ea85a"/><path d="M1226 30L1230 28.5L1232 33L1228 35Z" fill="#d9312b"/><path d="M1226 33L1233 35L1236 41L1233 43L1228 39Z" fill="#3d9ad6" stroke="#234" stroke-width="0.5"/><path d="M1234 40L1241 35" stroke="#e0a030" stroke-width="1.3"/><path d="M1275 27.2Q1280.5 27.8 1281 35V40.5L1283.7 43.3H1266.3L1269 40.5V35Q1269.5 27.8 1275 27.2Z" fill="#0a7dff" stroke="#000" stroke-width="1.1" stroke-linejoin="round"/><circle cx="1275" cy="26.8" r="1" fill="#0a7dff" stroke="#000" stroke-width="0.7"/><path d="M1273 43.5Q1275 46.5 1277 43.5" fill="#0a7dff" stroke="#000" stroke-width="0.9"/><g transform="translate(1319 35.8) scale(1)"><circle cx="0" cy="-5.3" r="4.3" fill="#10a14a"/><circle cx="5.3" cy="0" r="4.3" fill="#e8262c"/><circle cx="0" cy="5.3" r="4.3" fill="#f0b04a"/><circle cx="-5.3" cy="0" r="4.3" fill="#2ca7df"/><path d="M-1.8 -3.5A2 2 0 1 1 1.5 -1.8M1.8 -1.8A2 2 0 1 1 1.8 1.8M1.8 1.8A2 2 0 1 1 -1.8 1.8M-1.8 1.8A2 2 0 1 1 -1.8 -1.8" fill="none" stroke="#fff" stroke-width="1.1"/></g></svg>
<svg style="position:absolute;left:0;top:0;pointer-events:none" width="1792" height="718"><path d="M865 649.6L878 646L892.6 641.4L906 636.5L920.2 631.4L932 627.6L942.7 625.1L952 623.8L961.5 623.3L966 621L970.3 617L975 614L981 611.4" fill="none" stroke="#e21b1b" stroke-width="8.5" stroke-linecap="round" stroke-linejoin="round"/><path d="M970.9 582.5C990 592 1005 598 1012.9 603C1022 608 1028 612 1031.5 616C1026 619.5 1018 622 1011.6 625.1C1000 629.5 985 635 972.2 639.5" fill="none" stroke="#e21b1b" stroke-width="8.5" stroke-linecap="round" stroke-linejoin="round"/><path d="M1149.7 478.6C1149 492 1147.5 508 1146.8 521C1146.5 526 1148.5 528 1152 526C1165 518 1180 507 1194 497.7" fill="none" stroke="#e21b1b" stroke-width="8.5" stroke-linecap="round" stroke-linejoin="round"/><path d="M1164.3 498.6L1204.3 476.2" fill="none" stroke="#e21b1b" stroke-width="8.5" stroke-linecap="round"/></svg>
</body></html>
